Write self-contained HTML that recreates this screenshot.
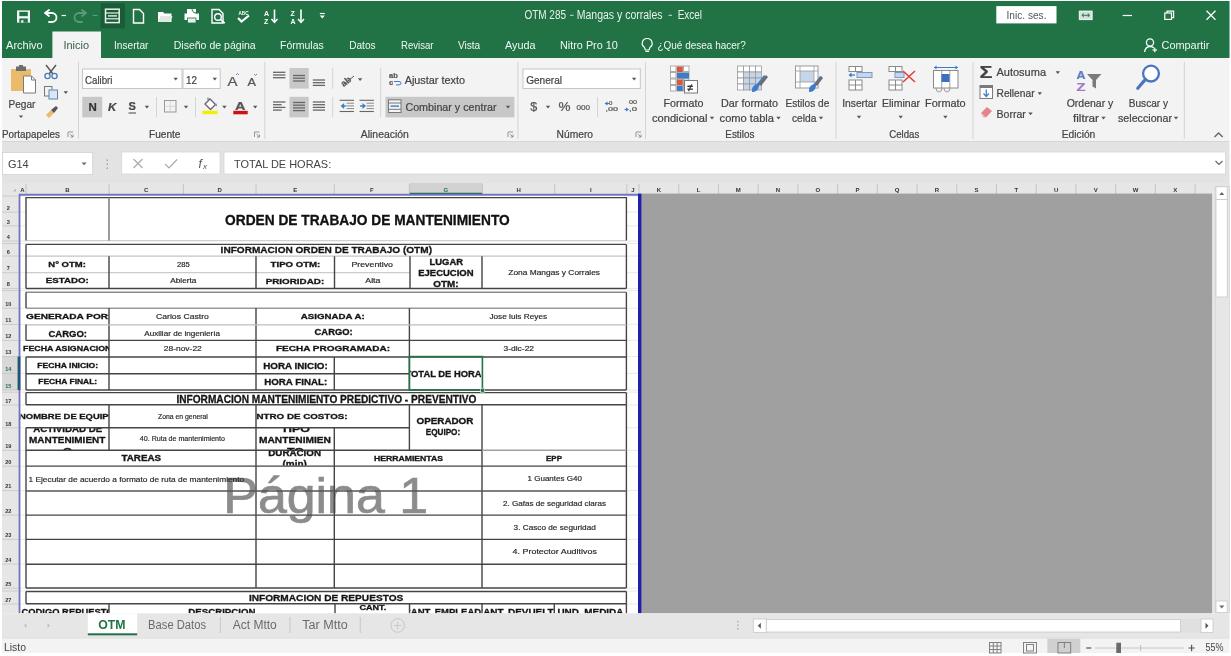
<!DOCTYPE html>
<html><head><meta charset="utf-8"><style>
html,body{margin:0;padding:0;background:#fff;overflow:hidden;}
body{width:1231px;height:656px;position:relative;}
svg{position:absolute;left:0;top:0;display:block;filter:blur(0.45px);}
text{font-family:"Liberation Sans",sans-serif;}
</style></head><body>
<svg width="1231" height="656" viewBox="0 0 1231 656" shape-rendering="auto">
<rect x="2.00" y="1.00" width="1227.50" height="57.00" fill="#217346" />
<rect x="100.60" y="3.20" width="24.40" height="25.20" fill="#1b5c38" />
<rect x="17.00" y="10.40" width="13.00" height="12.20" fill="#f4f8f5" />
<rect x="19.30" y="11.80" width="8.50" height="4.40" fill="#217346" />
<rect x="19.30" y="18.40" width="8.50" height="4.20" fill="#217346" />
<rect x="21.20" y="20.20" width="2.20" height="2.40" fill="#f4f8f5" />
<path d="M45,13 l4,-3 M45,13 l4,3 M45,13 h7 a4.5,4.5 0 0 1 0,9 h-3" fill="none" stroke="#ffffff" stroke-width="1.8" stroke-linecap="round"/>
<line x1="61.60" y1="15.50" x2="65.90" y2="15.50" stroke="#ffffff" stroke-width="1.2" />
<path d="M86,13 l-4,-3 M86,13 l-4,3 M86,13 h-7 a4.5,4.5 0 0 0 0,9 h3" fill="none" stroke="#5c9b78" stroke-width="1.8" stroke-linecap="round"/>
<line x1="92.70" y1="15.50" x2="97.60" y2="15.50" stroke="#5c9b78" stroke-width="1.2" />
<rect x="105.50" y="9.20" width="13.70" height="13.40" fill="none" stroke="#e8f0ea" stroke-width="1.5"/>
<line x1="105.50" y1="13.00" x2="119.20" y2="13.00" stroke="#e8f0ea" stroke-width="1.2" />
<line x1="105.50" y1="18.80" x2="119.20" y2="18.80" stroke="#e8f0ea" stroke-width="1.2" />
<line x1="108.00" y1="15.90" x2="117.00" y2="15.90" stroke="#e8f0ea" stroke-width="1.4" />
<path d="M133.5,9.5 h6 l4,4 v9.5 h-10 z" fill="none" stroke="#ffffff" stroke-width="1.4" />
<path d="M158,12 h5 l1.5,1.5 h7 v8.5 h-13.5 z" fill="#ffffff" stroke="none" stroke-width="1" />
<path d="M158,22 l2.5,-6 h12 l-2.5,6 z" fill="#dfe9e2" stroke="none" stroke-width="1" />
<rect x="187.00" y="9.00" width="9.00" height="5.00" fill="#ffffff" />
<rect x="184.50" y="13.50" width="14.50" height="6.50" fill="#ffffff" />
<rect x="187.50" y="18.00" width="8.50" height="5.00" fill="#e8efe9" stroke="#217346" stroke-width="0.8"/>
<path d="M192,9 a4,4 0 1 1 0,0.1" fill="none" stroke="#217346" stroke-width="1" />
<path d="M212,9.5 h7 l4,4 v9.5 h-11 z" fill="none" stroke="#ffffff" stroke-width="1.4" />
<circle cx="218" cy="17" r="3.3" fill="none" stroke="#ffffff" stroke-width="1.4"/>
<line x1="220.30" y1="19.30" x2="224.80" y2="23.20" stroke="#ffffff" stroke-width="1.6" />
<text x="238.50" y="14.50" font-family="Liberation Sans" font-size="5.5" font-weight="bold" fill="#ffffff" text-anchor="start" textLength="10.00" lengthAdjust="spacingAndGlyphs" >ABC</text>
<path d="M238,18 l3.5,3.5 l7.5,-6" fill="none" stroke="#ffffff" stroke-width="2.2" />
<text x="264.00" y="16.00" font-family="Liberation Sans" font-size="7" font-weight="bold" fill="#ffffff" text-anchor="start" >A</text>
<text x="264.00" y="23.50" font-family="Liberation Sans" font-size="7" font-weight="bold" fill="#ffffff" text-anchor="start" >Z</text>
<line x1="274.50" y1="9.50" x2="274.50" y2="22.00" stroke="#ffffff" stroke-width="1.6" />
<path d="M271.5,19 l3,3.5 l3,-3.5" fill="none" stroke="#ffffff" stroke-width="1.4" />
<text x="290.50" y="16.00" font-family="Liberation Sans" font-size="7" font-weight="bold" fill="#ffffff" text-anchor="start" >Z</text>
<text x="290.50" y="23.50" font-family="Liberation Sans" font-size="7" font-weight="bold" fill="#ffffff" text-anchor="start" >A</text>
<line x1="301.00" y1="9.50" x2="301.00" y2="22.00" stroke="#ffffff" stroke-width="1.6" />
<path d="M298,19 l3,3.5 l3,-3.5" fill="none" stroke="#ffffff" stroke-width="1.4" />
<line x1="319.80" y1="13.50" x2="324.80" y2="13.50" stroke="#ffffff" stroke-width="1.1" />
<path d="M319.8,15.5 h5 l-2.5,3 z" fill="#ffffff" stroke="none" stroke-width="1" />
<text x="524.40" y="19.30" font-family="Liberation Sans" font-size="12" font-weight="normal" fill="#e9f1ec" text-anchor="start" textLength="41.60" lengthAdjust="spacingAndGlyphs" >OTM 285</text>
<line x1="570.00" y1="15.30" x2="573.50" y2="15.30" stroke="#c8dccf" stroke-width="1" />
<text x="576.80" y="19.30" font-family="Liberation Sans" font-size="12" font-weight="normal" fill="#e9f1ec" text-anchor="start" textLength="85.70" lengthAdjust="spacingAndGlyphs" >Mangas y corrales</text>
<line x1="668.50" y1="15.30" x2="672.00" y2="15.30" stroke="#c8dccf" stroke-width="1" />
<text x="677.70" y="19.30" font-family="Liberation Sans" font-size="12" font-weight="normal" fill="#e9f1ec" text-anchor="start" textLength="24.30" lengthAdjust="spacingAndGlyphs" >Excel</text>
<rect x="996.30" y="6.10" width="60.20" height="17.30" fill="#ffffff" />
<text x="1006.50" y="19.40" font-family="Liberation Sans" font-size="10.5" font-weight="normal" fill="#555555" text-anchor="start" textLength="40.00" lengthAdjust="spacingAndGlyphs" >Inic. ses.</text>
<rect x="1079.50" y="11.30" width="12.50" height="8.10" fill="#cfe0d5" stroke="#e6efe9" stroke-width="1.4"/>
<path d="M1081.5,15.3 l2.2,-2.2 v4.4 z M1090,15.3 l-2.2,-2.2 v4.4 z" fill="#2e7a50" stroke="none" stroke-width="1" />
<line x1="1083.50" y1="15.30" x2="1088.00" y2="15.30" stroke="#2e7a50" stroke-width="1" />
<line x1="1122.70" y1="15.50" x2="1132.00" y2="15.50" stroke="#ffffff" stroke-width="1.2" />
<rect x="1164.80" y="13.00" width="6.70" height="6.40" fill="none" stroke="#fff" stroke-width="1.2"/>
<path d="M1167,13 v-1.8 h6.6 v6.5 h-2" fill="none" stroke="#ffffff" stroke-width="1.2" />
<path d="M1206.5,10.7 l9,9 M1215.5,10.7 l-9,9" fill="none" stroke="#ffffff" stroke-width="1.3" />
<rect x="52.40" y="31.50" width="48.60" height="26.50" fill="#f3f3f3" />
<text x="6.10" y="49.00" font-family="Liberation Sans" font-size="11.5" font-weight="normal" fill="#f2f6f3" text-anchor="start" textLength="36.60" lengthAdjust="spacingAndGlyphs" >Archivo</text>
<text x="114.00" y="49.00" font-family="Liberation Sans" font-size="11.5" font-weight="normal" fill="#f2f6f3" text-anchor="start" textLength="34.50" lengthAdjust="spacingAndGlyphs" >Insertar</text>
<text x="173.70" y="49.00" font-family="Liberation Sans" font-size="11.5" font-weight="normal" fill="#f2f6f3" text-anchor="start" textLength="82.00" lengthAdjust="spacingAndGlyphs" >Diseño de página</text>
<text x="280.00" y="49.00" font-family="Liberation Sans" font-size="11.5" font-weight="normal" fill="#f2f6f3" text-anchor="start" textLength="43.80" lengthAdjust="spacingAndGlyphs" >Fórmulas</text>
<text x="349.20" y="49.00" font-family="Liberation Sans" font-size="11.5" font-weight="normal" fill="#f2f6f3" text-anchor="start" textLength="26.40" lengthAdjust="spacingAndGlyphs" >Datos</text>
<text x="401.00" y="49.00" font-family="Liberation Sans" font-size="11.5" font-weight="normal" fill="#f2f6f3" text-anchor="start" textLength="32.50" lengthAdjust="spacingAndGlyphs" >Revisar</text>
<text x="457.90" y="49.00" font-family="Liberation Sans" font-size="11.5" font-weight="normal" fill="#f2f6f3" text-anchor="start" textLength="22.30" lengthAdjust="spacingAndGlyphs" >Vista</text>
<text x="505.00" y="49.00" font-family="Liberation Sans" font-size="11.5" font-weight="normal" fill="#f2f6f3" text-anchor="start" textLength="30.50" lengthAdjust="spacingAndGlyphs" >Ayuda</text>
<text x="560.00" y="49.00" font-family="Liberation Sans" font-size="11.5" font-weight="normal" fill="#f2f6f3" text-anchor="start" textLength="57.80" lengthAdjust="spacingAndGlyphs" >Nitro Pro 10</text>
<text x="657.40" y="49.00" font-family="Liberation Sans" font-size="11.5" font-weight="normal" fill="#f2f6f3" text-anchor="start" textLength="88.30" lengthAdjust="spacingAndGlyphs" >¿Qué desea hacer?</text>
<text x="63.40" y="49.00" font-family="Liberation Sans" font-size="11.5" font-weight="normal" fill="#3c5d49" text-anchor="start" textLength="25.60" lengthAdjust="spacingAndGlyphs" >Inicio</text>
<path d="M647.2,38.5 a4.8,4.8 0 0 1 2.8,8.8 l-1,2.7 h-3.6 l-1,-2.7 a4.8,4.8 0 0 1 2.8,-8.8 z" fill="none" stroke="#ffffff" stroke-width="1.2" />
<line x1="645.50" y1="51.50" x2="649.00" y2="51.50" stroke="#ffffff" stroke-width="1" />
<circle cx="1150" cy="42.5" r="3.6" fill="none" stroke="#ffffff" stroke-width="1.3"/>
<path d="M1144.5,52 q1,-5.5 5.5,-5.5 q2.5,0 4,1.6" fill="none" stroke="#ffffff" stroke-width="1.3" />
<line x1="1152.50" y1="50.00" x2="1157.00" y2="50.00" stroke="#ffffff" stroke-width="1.2" />
<line x1="1154.75" y1="47.80" x2="1154.75" y2="52.20" stroke="#ffffff" stroke-width="1.2" />
<text x="1161.50" y="49.00" font-family="Liberation Sans" font-size="11.5" font-weight="normal" fill="#f2f6f3" text-anchor="start" textLength="47.90" lengthAdjust="spacingAndGlyphs" >Compartir</text>
<rect x="2.00" y="58.00" width="1227.50" height="83.00" fill="#f3f3f3" />
<line x1="2.00" y1="141.50" x2="1229.50" y2="141.50" stroke="#d6d6d6" stroke-width="1" />
<rect x="2.00" y="142.00" width="1227.50" height="41.00" fill="#e3e3e3" />
<rect x="2.00" y="183.00" width="1227.50" height="11.00" fill="#e6e6e6" />
<rect x="11.00" y="69.00" width="20.00" height="22.00" fill="#e9bb6a" />
<rect x="16.00" y="66.50" width="10.00" height="4.50" fill="#6d6d6d" />
<rect x="19.00" y="65.00" width="4.00" height="2.00" fill="#6d6d6d" />
<path d="M23.5,76 h8 l4,4 v13 h-12 z" fill="#ffffff" stroke="#7a7a7a" stroke-width="1" />
<path d="M31.5,76 v4 h4" fill="none" stroke="#7a7a7a" stroke-width="1" />
<text x="8.50" y="107.50" font-family="Liberation Sans" font-size="11.5" font-weight="normal" fill="#444444" text-anchor="start" textLength="26.90" lengthAdjust="spacingAndGlyphs"  stroke="#444444" stroke-width="0.22">Pegar</text>
<path d="M18.80,115.50 h4.4 l-2.2,2.6 z" fill="#555" stroke="none" stroke-width="1" />
<path d="M46,65 l7,9 M56,65 l-7,9" fill="none" stroke="#555" stroke-width="1.4" />
<circle cx="47.5" cy="76" r="2.6" fill="none" stroke="#4a7ab8" stroke-width="1.3"/>
<circle cx="54.5" cy="76" r="2.6" fill="none" stroke="#4a7ab8" stroke-width="1.3"/>
<rect x="44.50" y="86.50" width="7.50" height="9.50" fill="#f3f3f3" stroke="#777" stroke-width="1"/>
<rect x="49.00" y="90.00" width="8.50" height="9.00" fill="#dce6f2" stroke="#5f85b5" stroke-width="1"/>
<path d="M63.60,91.30 h4.4 l-2.2,2.6 z" fill="#555" stroke="none" stroke-width="1" />
<path d="M46,115 l5,-5 l3,3 l-5,5 z" fill="#e9bb6a" stroke="none" stroke-width="1" />
<path d="M51,110 l5,-4 l2,2 l-4,5 z" fill="#555" stroke="none" stroke-width="1" />
<text x="2.00" y="137.80" font-family="Liberation Sans" font-size="11" font-weight="normal" fill="#444444" text-anchor="start" textLength="58.00" lengthAdjust="spacingAndGlyphs"  stroke="#444444" stroke-width="0.22">Portapapeles</text>
<path d="M68,137 v-5 h5" fill="none" stroke="#8a8a8a" stroke-width="0.9" />
<path d="M70,134 l3,3 M73,134.5 v2.5 h-2.5" fill="none" stroke="#8a8a8a" stroke-width="0.9" />
<line x1="78.50" y1="62.00" x2="78.50" y2="139.00" stroke="#d4d4d4" stroke-width="1" />
<rect x="82.50" y="69.00" width="99.50" height="19.50" fill="#ffffff" stroke="#c6c6c6" stroke-width="1"/>
<rect x="183.00" y="69.00" width="37.20" height="19.50" fill="#ffffff" stroke="#c6c6c6" stroke-width="1"/>
<text x="85.00" y="83.80" font-family="Liberation Sans" font-size="11.5" font-weight="normal" fill="#444444" text-anchor="start" textLength="27.50" lengthAdjust="spacingAndGlyphs"  stroke="#444444" stroke-width="0.22">Calibri</text>
<path d="M173.50,77.80 h4.4 l-2.2,2.6 z" fill="#555" stroke="none" stroke-width="1" />
<text x="186.00" y="83.80" font-family="Liberation Sans" font-size="11.5" font-weight="normal" fill="#444444" text-anchor="start" textLength="11.00" lengthAdjust="spacingAndGlyphs"  stroke="#444444" stroke-width="0.22">12</text>
<path d="M212.60,77.80 h4.4 l-2.2,2.6 z" fill="#555" stroke="none" stroke-width="1" />
<text x="227.50" y="86.00" font-family="Liberation Sans" font-size="13" font-weight="normal" fill="#555" text-anchor="start" textLength="10.00" lengthAdjust="spacingAndGlyphs"  stroke="#555" stroke-width="0.22">A</text>
<path d="M236,75 l1.5,-1.5 l1.5,1.5" fill="none" stroke="#5a8ad0" stroke-width="1" />
<text x="247.50" y="86.00" font-family="Liberation Sans" font-size="10.5" font-weight="normal" fill="#555" text-anchor="start" textLength="8.50" lengthAdjust="spacingAndGlyphs"  stroke="#555" stroke-width="0.22">A</text>
<path d="M254,74 l1.5,1.5 l1.5,-1.5" fill="none" stroke="#5a8ad0" stroke-width="1" />
<rect x="82.30" y="96.80" width="19.90" height="20.60" fill="#c8c8c8" />
<text x="88.50" y="111.00" font-family="Liberation Sans" font-size="11.5" font-weight="bold" fill="#333" text-anchor="start"  stroke="#333" stroke-width="0.22">N</text>
<text x="108.00" y="111.00" font-family="Liberation Sans" font-size="11.5" font-weight="bold" fill="#444" text-anchor="start" font-style="italic" stroke="#444" stroke-width="0.22">K</text>
<text x="128.50" y="110.00" font-family="Liberation Sans" font-size="11" font-weight="bold" fill="#444" text-anchor="start"  stroke="#444" stroke-width="0.22">S</text>
<line x1="128.50" y1="113.00" x2="136.00" y2="113.00" stroke="#444" stroke-width="1" />
<path d="M144.70,105.80 h4.4 l-2.2,2.6 z" fill="#555" stroke="none" stroke-width="1" />
<line x1="156.50" y1="97.00" x2="156.50" y2="117.00" stroke="#d4d4d4" stroke-width="1" />
<rect x="164.50" y="100.50" width="11.50" height="11.50" fill="none" stroke="#999" stroke-width="1"/>
<line x1="170.25" y1="100.50" x2="170.25" y2="112.00" stroke="#bbb" stroke-width="1" stroke-dasharray="1,1"/>
<line x1="164.50" y1="106.25" x2="176.00" y2="106.25" stroke="#bbb" stroke-width="1" stroke-dasharray="1,1"/>
<path d="M183.80,105.80 h4.4 l-2.2,2.6 z" fill="#555" stroke="none" stroke-width="1" />
<line x1="195.50" y1="97.00" x2="195.50" y2="117.00" stroke="#d4d4d4" stroke-width="1" />
<path d="M205,104 l5,-5 l5.5,5.5 l-5,5 z" fill="#ffffff" stroke="#666" stroke-width="1.3" />
<path d="M208,100 v-2.5" fill="none" stroke="#666" stroke-width="1" />
<path d="M214.5,104.5 l2,-1 l0.5,3 z" fill="#5a7fb0" stroke="none" stroke-width="1" />
<rect x="202.40" y="110.80" width="15.10" height="3.40" fill="#f2f000" />
<path d="M222.20,105.80 h4.4 l-2.2,2.6 z" fill="#555" stroke="none" stroke-width="1" />
<text x="235.00" y="109.80" font-family="Liberation Sans" font-size="11.5" font-weight="bold" fill="#555" text-anchor="start" textLength="10.50" lengthAdjust="spacingAndGlyphs"  stroke="#555" stroke-width="0.22">A</text>
<rect x="233.30" y="110.80" width="14.40" height="3.50" fill="#d01010" />
<path d="M253.00,105.80 h4.4 l-2.2,2.6 z" fill="#555" stroke="none" stroke-width="1" />
<text x="149.00" y="137.80" font-family="Liberation Sans" font-size="11" font-weight="normal" fill="#444444" text-anchor="start" textLength="31.50" lengthAdjust="spacingAndGlyphs"  stroke="#444444" stroke-width="0.22">Fuente</text>
<path d="M254.5,137 v-5 h5" fill="none" stroke="#8a8a8a" stroke-width="0.9" />
<path d="M256.5,134 l3,3 M259.5,134.5 v2.5 h-2.5" fill="none" stroke="#8a8a8a" stroke-width="0.9" />
<line x1="264.80" y1="62.00" x2="264.80" y2="139.00" stroke="#d4d4d4" stroke-width="1" />
<line x1="273.00" y1="72.30" x2="285.40" y2="72.30" stroke="#666" stroke-width="1.3" />
<line x1="273.00" y1="75.00" x2="285.40" y2="75.00" stroke="#666" stroke-width="1.3" />
<line x1="273.00" y1="77.70" x2="285.40" y2="77.70" stroke="#666" stroke-width="1.3" />
<rect x="289.50" y="68.00" width="19.20" height="20.60" fill="#c8c8c8" />
<line x1="293.00" y1="75.50" x2="305.00" y2="75.50" stroke="#666" stroke-width="1.3" />
<line x1="293.00" y1="78.20" x2="305.00" y2="78.20" stroke="#666" stroke-width="1.3" />
<line x1="293.00" y1="81.00" x2="305.00" y2="81.00" stroke="#666" stroke-width="1.3" />
<line x1="312.80" y1="80.00" x2="325.00" y2="80.00" stroke="#666" stroke-width="1.3" />
<line x1="312.80" y1="82.70" x2="325.00" y2="82.70" stroke="#666" stroke-width="1.3" />
<line x1="312.80" y1="85.40" x2="325.00" y2="85.40" stroke="#666" stroke-width="1.3" />
<line x1="332.70" y1="68.00" x2="332.70" y2="89.00" stroke="#d4d4d4" stroke-width="1" />
<text x="339.00" y="84.00" font-family="Liberation Sans" font-size="9" font-weight="bold" fill="#555" text-anchor="start" transform="rotate(-40 346 79)" stroke="#555" stroke-width="0.22">ab</text>
<path d="M343,85 l11,-9" fill="none" stroke="#555" stroke-width="1" />
<path d="M357.90,78.30 h4.4 l-2.2,2.6 z" fill="#555" stroke="none" stroke-width="1" />
<line x1="273.00" y1="102.00" x2="285.40" y2="102.00" stroke="#666" stroke-width="1.3" />
<line x1="273.00" y1="104.70" x2="281.68" y2="104.70" stroke="#666" stroke-width="1.3" />
<line x1="273.00" y1="107.40" x2="285.40" y2="107.40" stroke="#666" stroke-width="1.3" />
<line x1="273.00" y1="110.10" x2="281.68" y2="110.10" stroke="#666" stroke-width="1.3" />
<rect x="289.50" y="96.80" width="19.20" height="20.60" fill="#c8c8c8" />
<line x1="293.00" y1="102.50" x2="305.00" y2="102.50" stroke="#666" stroke-width="1.3" />
<line x1="293.00" y1="105.20" x2="305.00" y2="105.20" stroke="#666" stroke-width="1.3" />
<line x1="293.00" y1="107.90" x2="305.00" y2="107.90" stroke="#666" stroke-width="1.3" />
<line x1="293.00" y1="110.60" x2="305.00" y2="110.60" stroke="#666" stroke-width="1.3" />
<line x1="312.80" y1="102.00" x2="325.00" y2="102.00" stroke="#666" stroke-width="1.3" />
<line x1="312.80" y1="104.70" x2="325.00" y2="104.70" stroke="#666" stroke-width="1.3" />
<line x1="312.80" y1="107.40" x2="325.00" y2="107.40" stroke="#666" stroke-width="1.3" />
<line x1="312.80" y1="110.10" x2="325.00" y2="110.10" stroke="#666" stroke-width="1.3" />
<line x1="332.70" y1="97.00" x2="332.70" y2="117.00" stroke="#d4d4d4" stroke-width="1" />
<line x1="339.60" y1="100.30" x2="354.00" y2="100.30" stroke="#666" stroke-width="1.1" />
<line x1="339.60" y1="111.50" x2="354.00" y2="111.50" stroke="#666" stroke-width="1.1" />
<line x1="346.60" y1="103.20" x2="354.00" y2="103.20" stroke="#888" stroke-width="1" />
<line x1="346.60" y1="105.90" x2="354.00" y2="105.90" stroke="#888" stroke-width="1" />
<line x1="346.60" y1="108.60" x2="354.00" y2="108.60" stroke="#888" stroke-width="1" />
<path d="M340.6,106 l3.5,-3 v6 z" fill="#3f7cc8" stroke="none" stroke-width="1" />
<line x1="342.60" y1="106.00" x2="346.10" y2="106.00" stroke="#3f7cc8" stroke-width="1.4" />
<line x1="359.50" y1="100.30" x2="373.90" y2="100.30" stroke="#666" stroke-width="1.1" />
<line x1="359.50" y1="111.50" x2="373.90" y2="111.50" stroke="#666" stroke-width="1.1" />
<line x1="366.50" y1="103.20" x2="373.90" y2="103.20" stroke="#888" stroke-width="1" />
<line x1="366.50" y1="105.90" x2="373.90" y2="105.90" stroke="#888" stroke-width="1" />
<line x1="366.50" y1="108.60" x2="373.90" y2="108.60" stroke="#888" stroke-width="1" />
<path d="M366.0,106 l-3.5,-3 v6 z" fill="#3f7cc8" stroke="none" stroke-width="1" />
<line x1="360.00" y1="106.00" x2="363.50" y2="106.00" stroke="#3f7cc8" stroke-width="1.4" />
<line x1="380.70" y1="68.00" x2="380.70" y2="117.00" stroke="#d4d4d4" stroke-width="1" />
<text x="389.00" y="78.00" font-family="Liberation Sans" font-size="7.5" font-weight="bold" fill="#555" text-anchor="start"  stroke="#555" stroke-width="0.22">ab</text>
<text x="389.00" y="84.50" font-family="Liberation Sans" font-size="7.5" font-weight="bold" fill="#555" text-anchor="start"  stroke="#555" stroke-width="0.22">c</text>
<path d="M394,81.5 h5 q2,0 2,1.7 q0,1.7 -2,1.7 h-3" fill="none" stroke="#3f7cc8" stroke-width="1" />
<text x="404.70" y="83.80" font-family="Liberation Sans" font-size="11.5" font-weight="normal" fill="#444444" text-anchor="start" textLength="60.30" lengthAdjust="spacingAndGlyphs"  stroke="#444444" stroke-width="0.22">Ajustar texto</text>
<rect x="385.50" y="96.80" width="128.90" height="20.60" fill="#c8c8c8" />
<rect x="388.50" y="99.80" width="12.50" height="12.70" fill="#f3f3f3" stroke="#777" stroke-width="1"/>
<line x1="388.50" y1="103.00" x2="401.00" y2="103.00" stroke="#777" stroke-width="1" />
<line x1="388.50" y1="109.30" x2="401.00" y2="109.30" stroke="#777" stroke-width="1" />
<line x1="390.50" y1="106.10" x2="399.00" y2="106.10" stroke="#3f7cc8" stroke-width="1.4" />
<text x="405.40" y="111.20" font-family="Liberation Sans" font-size="11.5" font-weight="normal" fill="#444444" text-anchor="start" textLength="91.20" lengthAdjust="spacingAndGlyphs"  stroke="#444444" stroke-width="0.22">Combinar y centrar</text>
<path d="M505.80,105.80 h4.4 l-2.2,2.6 z" fill="#555" stroke="none" stroke-width="1" />
<text x="360.80" y="137.80" font-family="Liberation Sans" font-size="11" font-weight="normal" fill="#444444" text-anchor="start" textLength="48.00" lengthAdjust="spacingAndGlyphs"  stroke="#444444" stroke-width="0.22">Alineación</text>
<path d="M508,137 v-5 h5" fill="none" stroke="#8a8a8a" stroke-width="0.9" />
<path d="M510,134 l3,3 M513,134.5 v2.5 h-2.5" fill="none" stroke="#8a8a8a" stroke-width="0.9" />
<line x1="517.90" y1="62.00" x2="517.90" y2="139.00" stroke="#d4d4d4" stroke-width="1" />
<rect x="523.00" y="69.00" width="117.30" height="19.50" fill="#ffffff" stroke="#c6c6c6" stroke-width="1"/>
<text x="526.20" y="83.80" font-family="Liberation Sans" font-size="11.5" font-weight="normal" fill="#444444" text-anchor="start" textLength="35.80" lengthAdjust="spacingAndGlyphs"  stroke="#444444" stroke-width="0.22">General</text>
<path d="M631.90,77.80 h4.4 l-2.2,2.6 z" fill="#555" stroke="none" stroke-width="1" />
<text x="530.20" y="111.00" font-family="Liberation Sans" font-size="13" font-weight="normal" fill="#555" text-anchor="start" textLength="7.00" lengthAdjust="spacingAndGlyphs"  stroke="#555" stroke-width="0.22">$</text>
<path d="M545.80,105.80 h4.4 l-2.2,2.6 z" fill="#555" stroke="none" stroke-width="1" />
<text x="558.50" y="110.80" font-family="Liberation Sans" font-size="12" font-weight="normal" fill="#555" text-anchor="start" textLength="12.00" lengthAdjust="spacingAndGlyphs"  stroke="#555" stroke-width="0.22">%</text>
<text x="576.50" y="109.50" font-family="Liberation Sans" font-size="8" font-weight="normal" fill="#555" text-anchor="start" textLength="13.50" lengthAdjust="spacingAndGlyphs"  stroke="#555" stroke-width="0.22">000</text>
<line x1="597.50" y1="97.00" x2="597.50" y2="117.00" stroke="#d4d4d4" stroke-width="1" />
<text x="609.00" y="104.50" font-family="Liberation Sans" font-size="6" font-weight="normal" fill="#555" text-anchor="start"  stroke="#555" stroke-width="0.22">0</text>
<text x="605.50" y="111.00" font-family="Liberation Sans" font-size="6" font-weight="normal" fill="#555" text-anchor="start" textLength="12.50" lengthAdjust="spacingAndGlyphs"  stroke="#555" stroke-width="0.22">,00</text>
<path d="M604.5,103.5 l3,-2 v4 z" fill="#3f7cc8" stroke="none" stroke-width="1" />
<line x1="606.00" y1="103.50" x2="609.50" y2="103.50" stroke="#3f7cc8" stroke-width="1.1" />
<text x="629.00" y="104.00" font-family="Liberation Sans" font-size="6" font-weight="normal" fill="#555" text-anchor="start" textLength="8.00" lengthAdjust="spacingAndGlyphs"  stroke="#555" stroke-width="0.22">00</text>
<text x="629.00" y="111.00" font-family="Liberation Sans" font-size="6" font-weight="normal" fill="#555" text-anchor="start" textLength="8.00" lengthAdjust="spacingAndGlyphs"  stroke="#555" stroke-width="0.22">,0</text>
<path d="M629,109.5 l-3,-2 v4 z" fill="#3f7cc8" stroke="none" stroke-width="1" />
<line x1="624.50" y1="109.50" x2="628.00" y2="109.50" stroke="#3f7cc8" stroke-width="1.1" />
<text x="556.60" y="137.80" font-family="Liberation Sans" font-size="11" font-weight="normal" fill="#444444" text-anchor="start" textLength="36.40" lengthAdjust="spacingAndGlyphs"  stroke="#444444" stroke-width="0.22">Número</text>
<path d="M636,137 v-5 h5" fill="none" stroke="#8a8a8a" stroke-width="0.9" />
<path d="M638,134 l3,3 M641,134.5 v2.5 h-2.5" fill="none" stroke="#8a8a8a" stroke-width="0.9" />
<line x1="645.50" y1="62.00" x2="645.50" y2="139.00" stroke="#d4d4d4" stroke-width="1" />
<rect x="670.50" y="66.00" width="5.50" height="5.50" fill="#ffffff" stroke="#9a9a9a" stroke-width="0.8"/>
<rect x="677.00" y="66.00" width="5.50" height="5.50" fill="#ffffff" stroke="#9a9a9a" stroke-width="0.8"/>
<rect x="683.50" y="66.00" width="5.50" height="5.50" fill="#ffffff" stroke="#9a9a9a" stroke-width="0.8"/>
<rect x="670.50" y="72.50" width="5.50" height="5.50" fill="#ffffff" stroke="#9a9a9a" stroke-width="0.8"/>
<rect x="677.00" y="72.50" width="5.50" height="5.50" fill="#ffffff" stroke="#9a9a9a" stroke-width="0.8"/>
<rect x="683.50" y="72.50" width="5.50" height="5.50" fill="#ffffff" stroke="#9a9a9a" stroke-width="0.8"/>
<rect x="670.50" y="79.00" width="5.50" height="5.50" fill="#ffffff" stroke="#9a9a9a" stroke-width="0.8"/>
<rect x="677.00" y="79.00" width="5.50" height="5.50" fill="#ffffff" stroke="#9a9a9a" stroke-width="0.8"/>
<rect x="683.50" y="79.00" width="5.50" height="5.50" fill="#ffffff" stroke="#9a9a9a" stroke-width="0.8"/>
<rect x="670.50" y="85.50" width="5.50" height="5.50" fill="#ffffff" stroke="#9a9a9a" stroke-width="0.8"/>
<rect x="677.00" y="85.50" width="5.50" height="5.50" fill="#ffffff" stroke="#9a9a9a" stroke-width="0.8"/>
<rect x="683.50" y="85.50" width="5.50" height="5.50" fill="#ffffff" stroke="#9a9a9a" stroke-width="0.8"/>
<rect x="677.00" y="66.50" width="5.50" height="5.50" fill="#d9573b" />
<rect x="677.00" y="73.00" width="12.00" height="5.50" fill="#3f7cc8" />
<rect x="677.00" y="79.50" width="5.50" height="5.50" fill="#d9573b" />
<rect x="677.00" y="86.00" width="5.50" height="5.00" fill="#3f7cc8" />
<rect x="684.50" y="80.50" width="13.00" height="12.50" fill="#ffffff" stroke="#777" stroke-width="1"/>
<text x="687.50" y="90.50" font-family="Liberation Sans" font-size="10" font-weight="bold" fill="#333" text-anchor="start"  stroke="#333" stroke-width="0.22">≠</text>
<text x="663.50" y="107.00" font-family="Liberation Sans" font-size="11.5" font-weight="normal" fill="#444444" text-anchor="start" textLength="39.90" lengthAdjust="spacingAndGlyphs"  stroke="#444444" stroke-width="0.22">Formato</text>
<text x="652.00" y="121.50" font-family="Liberation Sans" font-size="11.5" font-weight="normal" fill="#444444" text-anchor="start" textLength="55.50" lengthAdjust="spacingAndGlyphs"  stroke="#444444" stroke-width="0.22">condicional</text>
<path d="M709.80,116.80 h4.4 l-2.2,2.6 z" fill="#555" stroke="none" stroke-width="1" />
<rect x="737.50" y="66.00" width="6.00" height="6.00" fill="#ffffff" stroke="#9a9a9a" stroke-width="0.8"/>
<rect x="743.50" y="66.00" width="6.00" height="6.00" fill="#ffffff" stroke="#9a9a9a" stroke-width="0.8"/>
<rect x="749.50" y="66.00" width="6.00" height="6.00" fill="#ffffff" stroke="#9a9a9a" stroke-width="0.8"/>
<rect x="755.50" y="66.00" width="6.00" height="6.00" fill="#ffffff" stroke="#9a9a9a" stroke-width="0.8"/>
<rect x="737.50" y="72.00" width="6.00" height="6.00" fill="#ffffff" stroke="#9a9a9a" stroke-width="0.8"/>
<rect x="743.50" y="72.00" width="6.00" height="6.00" fill="#c5d5ea" stroke="#9a9a9a" stroke-width="0.8"/>
<rect x="749.50" y="72.00" width="6.00" height="6.00" fill="#c5d5ea" stroke="#9a9a9a" stroke-width="0.8"/>
<rect x="755.50" y="72.00" width="6.00" height="6.00" fill="#c5d5ea" stroke="#9a9a9a" stroke-width="0.8"/>
<rect x="737.50" y="78.00" width="6.00" height="6.00" fill="#ffffff" stroke="#9a9a9a" stroke-width="0.8"/>
<rect x="743.50" y="78.00" width="6.00" height="6.00" fill="#c5d5ea" stroke="#9a9a9a" stroke-width="0.8"/>
<rect x="749.50" y="78.00" width="6.00" height="6.00" fill="#c5d5ea" stroke="#9a9a9a" stroke-width="0.8"/>
<rect x="755.50" y="78.00" width="6.00" height="6.00" fill="#c5d5ea" stroke="#9a9a9a" stroke-width="0.8"/>
<rect x="737.50" y="84.00" width="6.00" height="6.00" fill="#ffffff" stroke="#9a9a9a" stroke-width="0.8"/>
<rect x="743.50" y="84.00" width="6.00" height="6.00" fill="#c5d5ea" stroke="#9a9a9a" stroke-width="0.8"/>
<rect x="749.50" y="84.00" width="6.00" height="6.00" fill="#c5d5ea" stroke="#9a9a9a" stroke-width="0.8"/>
<rect x="755.50" y="84.00" width="6.00" height="6.00" fill="#c5d5ea" stroke="#9a9a9a" stroke-width="0.8"/>
<path d="M752,92 q-1,-6 5,-8 l7,-9 l2,2 l-7,9 q-1,6 -7,6 z" fill="#3f7cc8" stroke="none" stroke-width="1" />
<path d="M759,84 l7,-9 l2,2 l-7,9 z" fill="#6d6d6d" stroke="none" stroke-width="1" />
<text x="721.00" y="107.00" font-family="Liberation Sans" font-size="11.5" font-weight="normal" fill="#444444" text-anchor="start" textLength="57.00" lengthAdjust="spacingAndGlyphs"  stroke="#444444" stroke-width="0.22">Dar formato</text>
<text x="719.60" y="121.50" font-family="Liberation Sans" font-size="11.5" font-weight="normal" fill="#444444" text-anchor="start" textLength="54.40" lengthAdjust="spacingAndGlyphs"  stroke="#444444" stroke-width="0.22">como tabla</text>
<path d="M776.30,116.80 h4.4 l-2.2,2.6 z" fill="#555" stroke="none" stroke-width="1" />
<rect x="795.50" y="66.00" width="22.50" height="22.00" fill="#ffffff" stroke="#9a9a9a" stroke-width="1"/>
<rect x="800.00" y="71.00" width="14.00" height="11.00" fill="#c5d5ea" />
<line x1="795.50" y1="71.00" x2="818.00" y2="71.00" stroke="#9a9a9a" stroke-width="0.8" />
<line x1="800.00" y1="66.00" x2="800.00" y2="88.00" stroke="#9a9a9a" stroke-width="0.8" />
<line x1="814.00" y1="66.00" x2="814.00" y2="88.00" stroke="#9a9a9a" stroke-width="0.8" />
<line x1="795.50" y1="82.00" x2="818.00" y2="82.00" stroke="#9a9a9a" stroke-width="0.8" />
<path d="M809,92 q-1,-6 5,-8 l6,-8 l2,2 l-6,8 q-1,6 -7,6 z" fill="#3f7cc8" stroke="none" stroke-width="1" />
<path d="M815,84 l6,-8 l2,2 l-6,8 z" fill="#6d6d6d" stroke="none" stroke-width="1" />
<text x="785.40" y="107.00" font-family="Liberation Sans" font-size="11.5" font-weight="normal" fill="#444444" text-anchor="start" textLength="43.90" lengthAdjust="spacingAndGlyphs"  stroke="#444444" stroke-width="0.22">Estilos de</text>
<text x="792.00" y="121.50" font-family="Liberation Sans" font-size="11.5" font-weight="normal" fill="#444444" text-anchor="start" textLength="24.50" lengthAdjust="spacingAndGlyphs"  stroke="#444444" stroke-width="0.22">celda</text>
<path d="M818.80,116.80 h4.4 l-2.2,2.6 z" fill="#555" stroke="none" stroke-width="1" />
<text x="725.30" y="137.80" font-family="Liberation Sans" font-size="11" font-weight="normal" fill="#444444" text-anchor="start" textLength="29.20" lengthAdjust="spacingAndGlyphs"  stroke="#444444" stroke-width="0.22">Estilos</text>
<line x1="836.00" y1="62.00" x2="836.00" y2="139.00" stroke="#d4d4d4" stroke-width="1" />
<rect x="849.00" y="66.50" width="13.00" height="5.00" fill="#fff" stroke="#8a8a8a" stroke-width="1"/>
<line x1="855.50" y1="66.50" x2="855.50" y2="71.50" stroke="#8a8a8a" stroke-width="1" />
<rect x="857.00" y="72.50" width="15.00" height="5.00" fill="#c5d5ea" stroke="#7a9ac5" stroke-width="1"/>
<path d="M848.5,75 l3,-2.5 v5 z" fill="#3f7cc8" stroke="none" stroke-width="1" />
<line x1="850.00" y1="75.00" x2="855.00" y2="75.00" stroke="#3f7cc8" stroke-width="1.3" />
<rect x="849.00" y="80.00" width="13.00" height="10.00" fill="#fff" stroke="#8a8a8a" stroke-width="1"/>
<line x1="855.50" y1="80.00" x2="855.50" y2="90.00" stroke="#8a8a8a" stroke-width="1" />
<line x1="849.00" y1="85.00" x2="862.00" y2="85.00" stroke="#8a8a8a" stroke-width="1" />
<text x="842.20" y="107.00" font-family="Liberation Sans" font-size="11.5" font-weight="normal" fill="#444444" text-anchor="start" textLength="34.80" lengthAdjust="spacingAndGlyphs"  stroke="#444444" stroke-width="0.22">Insertar</text>
<path d="M856.80,115.80 h4.4 l-2.2,2.6 z" fill="#555" stroke="none" stroke-width="1" />
<rect x="889.00" y="66.50" width="13.00" height="5.00" fill="#fff" stroke="#8a8a8a" stroke-width="1"/>
<line x1="895.50" y1="66.50" x2="895.50" y2="71.50" stroke="#8a8a8a" stroke-width="1" />
<rect x="895.00" y="72.50" width="9.00" height="5.00" fill="#c5d5ea" stroke="#7a9ac5" stroke-width="1"/>
<rect x="889.00" y="80.00" width="13.00" height="10.00" fill="#fff" stroke="#8a8a8a" stroke-width="1"/>
<line x1="895.50" y1="80.00" x2="895.50" y2="90.00" stroke="#8a8a8a" stroke-width="1" />
<line x1="889.00" y1="85.00" x2="902.00" y2="85.00" stroke="#8a8a8a" stroke-width="1" />
<path d="M903,71 l12,11 M915,71 l-12,11" fill="none" stroke="#e0413a" stroke-width="1.6" />
<text x="882.00" y="107.00" font-family="Liberation Sans" font-size="11.5" font-weight="normal" fill="#444444" text-anchor="start" textLength="38.00" lengthAdjust="spacingAndGlyphs"  stroke="#444444" stroke-width="0.22">Eliminar</text>
<path d="M898.50,115.80 h4.4 l-2.2,2.6 z" fill="#555" stroke="none" stroke-width="1" />
<line x1="934.00" y1="67.50" x2="958.00" y2="67.50" stroke="#3f7cc8" stroke-width="1" />
<path d="M934,67.5 l2.5,-2 v4 z M958,67.5 l-2.5,-2 v4 z" fill="#3f7cc8" stroke="none" stroke-width="1" />
<rect x="933.50" y="70.50" width="24.50" height="17.50" fill="#fff" stroke="#8a8a8a" stroke-width="1"/>
<line x1="941.70" y1="70.50" x2="941.70" y2="88.00" stroke="#8a8a8a" stroke-width="0.8" />
<line x1="949.80" y1="70.50" x2="949.80" y2="88.00" stroke="#8a8a8a" stroke-width="0.8" />
<rect x="941.50" y="74.00" width="8.00" height="8.00" fill="#3f6ec0" />
<path d="M936,88 q0,4 3,4 q3,0 3,-4 M944,88 q0,4 3,4 q3,0 3,-4" fill="none" stroke="#8a8a8a" stroke-width="0.8" />
<text x="925.00" y="107.00" font-family="Liberation Sans" font-size="11.5" font-weight="normal" fill="#444444" text-anchor="start" textLength="40.70" lengthAdjust="spacingAndGlyphs"  stroke="#444444" stroke-width="0.22">Formato</text>
<path d="M943.20,115.80 h4.4 l-2.2,2.6 z" fill="#555" stroke="none" stroke-width="1" />
<text x="889.30" y="137.80" font-family="Liberation Sans" font-size="11" font-weight="normal" fill="#444444" text-anchor="start" textLength="30.00" lengthAdjust="spacingAndGlyphs"  stroke="#444444" stroke-width="0.22">Celdas</text>
<line x1="973.00" y1="62.00" x2="973.00" y2="139.00" stroke="#d4d4d4" stroke-width="1" />
<text x="979.50" y="78.30" font-family="Liberation Sans" font-size="17" font-weight="bold" fill="#444" text-anchor="start" textLength="13.00" lengthAdjust="spacingAndGlyphs"  stroke="#444" stroke-width="0.22">Σ</text>
<text x="996.50" y="76.20" font-family="Liberation Sans" font-size="11.5" font-weight="normal" fill="#444444" text-anchor="start" textLength="49.50" lengthAdjust="spacingAndGlyphs"  stroke="#444444" stroke-width="0.22">Autosuma</text>
<path d="M1055.60,71.30 h4.4 l-2.2,2.6 z" fill="#555" stroke="none" stroke-width="1" />
<rect x="980.00" y="85.50" width="12.50" height="13.00" fill="#fff" stroke="#7a7a7a" stroke-width="1"/>
<rect x="980.00" y="85.50" width="12.50" height="2.50" fill="#7a7a7a" />
<line x1="986.25" y1="89.50" x2="986.25" y2="96.00" stroke="#3f7cc8" stroke-width="1.3" />
<path d="M983.5,93.5 l2.75,3 l2.75,-3" fill="none" stroke="#3f7cc8" stroke-width="1.2" />
<text x="996.50" y="97.40" font-family="Liberation Sans" font-size="11.5" font-weight="normal" fill="#444444" text-anchor="start" textLength="38.10" lengthAdjust="spacingAndGlyphs"  stroke="#444444" stroke-width="0.22">Rellenar</text>
<path d="M1037.60,92.30 h4.4 l-2.2,2.6 z" fill="#555" stroke="none" stroke-width="1" />
<path d="M981,113 l6,-6 l5,4 l-6,6.5 z" fill="#e8828c" stroke="none" stroke-width="1" />
<path d="M980.5,114 l3,3.5 h3" fill="#f0a8ae" stroke="none" stroke-width="1" />
<text x="996.50" y="117.60" font-family="Liberation Sans" font-size="11.5" font-weight="normal" fill="#444444" text-anchor="start" textLength="29.30" lengthAdjust="spacingAndGlyphs"  stroke="#444444" stroke-width="0.22">Borrar</text>
<path d="M1028.30,112.60 h4.4 l-2.2,2.6 z" fill="#555" stroke="none" stroke-width="1" />
<text x="1076.50" y="79.00" font-family="Liberation Sans" font-size="11" font-weight="bold" fill="#5a7fc0" text-anchor="start" textLength="9.00" lengthAdjust="spacingAndGlyphs"  stroke="#5a7fc0" stroke-width="0.22">A</text>
<text x="1076.50" y="90.50" font-family="Liberation Sans" font-size="11" font-weight="bold" fill="#a07cc0" text-anchor="start" textLength="9.00" lengthAdjust="spacingAndGlyphs"  stroke="#a07cc0" stroke-width="0.22">Z</text>
<path d="M1087,74 h14.5 l-5.5,6 v8.5 l-3.5,-2 v-6.5 z" fill="#7a7a7a" stroke="none" stroke-width="1" />
<text x="1066.70" y="107.00" font-family="Liberation Sans" font-size="11.5" font-weight="normal" fill="#444444" text-anchor="start" textLength="46.60" lengthAdjust="spacingAndGlyphs"  stroke="#444444" stroke-width="0.22">Ordenar y</text>
<text x="1073.00" y="121.50" font-family="Liberation Sans" font-size="11.5" font-weight="normal" fill="#444444" text-anchor="start" textLength="26.00" lengthAdjust="spacingAndGlyphs"  stroke="#444444" stroke-width="0.22">filtrar</text>
<path d="M1101.30,116.80 h4.4 l-2.2,2.6 z" fill="#555" stroke="none" stroke-width="1" />
<circle cx="1151" cy="73.6" r="7.9" fill="#ffffff" stroke="#4a74c0" stroke-width="2.3"/>
<line x1="1145.40" y1="79.40" x2="1137.80" y2="88.20" stroke="#4a74c0" stroke-width="3.2" stroke-linecap="round"/>
<text x="1128.80" y="107.00" font-family="Liberation Sans" font-size="11.5" font-weight="normal" fill="#444444" text-anchor="start" textLength="39.20" lengthAdjust="spacingAndGlyphs"  stroke="#444444" stroke-width="0.22">Buscar y</text>
<text x="1118.00" y="121.50" font-family="Liberation Sans" font-size="11.5" font-weight="normal" fill="#444444" text-anchor="start" textLength="54.00" lengthAdjust="spacingAndGlyphs"  stroke="#444444" stroke-width="0.22">seleccionar</text>
<path d="M1173.80,116.80 h4.4 l-2.2,2.6 z" fill="#555" stroke="none" stroke-width="1" />
<text x="1061.80" y="137.80" font-family="Liberation Sans" font-size="11" font-weight="normal" fill="#444444" text-anchor="start" textLength="33.50" lengthAdjust="spacingAndGlyphs"  stroke="#444444" stroke-width="0.22">Edición</text>
<line x1="1184.30" y1="62.00" x2="1184.30" y2="139.00" stroke="#d4d4d4" stroke-width="1" />
<path d="M1214.5,137 l4.1,-4 l4.1,4" fill="none" stroke="#666" stroke-width="1.4" />
<rect x="2.40" y="152.50" width="90.30" height="22.00" fill="#ffffff" stroke="#d0d0d0" stroke-width="0.8"/>
<text x="7.90" y="168.30" font-family="Liberation Sans" font-size="11.5" font-weight="normal" fill="#444444" text-anchor="start" textLength="20.80" lengthAdjust="spacingAndGlyphs" >G14</text>
<path d="M81.6,162.5 h5 l-2.5,2.8 z" fill="#666" stroke="none" stroke-width="1" />
<rect x="106.60" y="159.50" width="1.40" height="1.40" fill="#9a9a9a" />
<rect x="106.60" y="163.50" width="1.40" height="1.40" fill="#9a9a9a" />
<rect x="106.60" y="167.50" width="1.40" height="1.40" fill="#9a9a9a" />
<rect x="121.70" y="152.00" width="98.30" height="22.00" fill="#ffffff" stroke="#d6d6d6" stroke-width="0.8"/>
<path d="M133.5,159 l9,9 M142.5,159 l-9,9" fill="none" stroke="#a8a8a8" stroke-width="1.1" />
<path d="M165,164 l4,4 l8,-8.5" fill="none" stroke="#a8a8a8" stroke-width="1.1" />
<text x="198.50" y="167.50" font-family="Liberation Sans" font-size="12" font-weight="normal" fill="#555" text-anchor="start" font-style="italic" font-family="Liberation Serif">f</text>
<text x="203.00" y="168.50" font-family="Liberation Sans" font-size="8" font-weight="normal" fill="#555" text-anchor="start" font-style="italic" font-family="Liberation Serif">x</text>
<rect x="224.00" y="152.00" width="1001.60" height="22.00" fill="#ffffff" stroke="#d6d6d6" stroke-width="0.8"/>
<text x="234.00" y="168.20" font-family="Liberation Sans" font-size="11.5" font-weight="normal" fill="#444444" text-anchor="start" textLength="97.20" lengthAdjust="spacingAndGlyphs" >TOTAL DE HORAS:</text>
<path d="M1215.5,161 l3.5,3.5 l3.5,-3.5" fill="none" stroke="#666" stroke-width="1.2" />
<rect x="2.00" y="183.00" width="1210.50" height="11.00" fill="#e6e6e6" />
<rect x="409.40" y="183.00" width="73.00" height="11.00" fill="#d2d2d2" />
<line x1="409.40" y1="193.30" x2="482.40" y2="193.30" stroke="#217346" stroke-width="1.2" />
<line x1="26.00" y1="184.00" x2="26.00" y2="194.00" stroke="#bdbdbd" stroke-width="0.8" />
<line x1="109.00" y1="184.00" x2="109.00" y2="194.00" stroke="#bdbdbd" stroke-width="0.8" />
<line x1="183.40" y1="184.00" x2="183.40" y2="194.00" stroke="#bdbdbd" stroke-width="0.8" />
<line x1="256.00" y1="184.00" x2="256.00" y2="194.00" stroke="#bdbdbd" stroke-width="0.8" />
<line x1="334.30" y1="184.00" x2="334.30" y2="194.00" stroke="#bdbdbd" stroke-width="0.8" />
<line x1="409.40" y1="184.00" x2="409.40" y2="194.00" stroke="#bdbdbd" stroke-width="0.8" />
<line x1="482.40" y1="184.00" x2="482.40" y2="194.00" stroke="#bdbdbd" stroke-width="0.8" />
<line x1="554.70" y1="184.00" x2="554.70" y2="194.00" stroke="#bdbdbd" stroke-width="0.8" />
<line x1="626.80" y1="184.00" x2="626.80" y2="194.00" stroke="#bdbdbd" stroke-width="0.8" />
<line x1="639.00" y1="184.00" x2="639.00" y2="194.00" stroke="#bdbdbd" stroke-width="0.8" />
<line x1="678.72" y1="184.00" x2="678.72" y2="194.00" stroke="#bdbdbd" stroke-width="0.8" />
<line x1="718.44" y1="184.00" x2="718.44" y2="194.00" stroke="#bdbdbd" stroke-width="0.8" />
<line x1="758.16" y1="184.00" x2="758.16" y2="194.00" stroke="#bdbdbd" stroke-width="0.8" />
<line x1="797.88" y1="184.00" x2="797.88" y2="194.00" stroke="#bdbdbd" stroke-width="0.8" />
<line x1="837.60" y1="184.00" x2="837.60" y2="194.00" stroke="#bdbdbd" stroke-width="0.8" />
<line x1="877.32" y1="184.00" x2="877.32" y2="194.00" stroke="#bdbdbd" stroke-width="0.8" />
<line x1="917.04" y1="184.00" x2="917.04" y2="194.00" stroke="#bdbdbd" stroke-width="0.8" />
<line x1="956.76" y1="184.00" x2="956.76" y2="194.00" stroke="#bdbdbd" stroke-width="0.8" />
<line x1="996.48" y1="184.00" x2="996.48" y2="194.00" stroke="#bdbdbd" stroke-width="0.8" />
<line x1="1036.20" y1="184.00" x2="1036.20" y2="194.00" stroke="#bdbdbd" stroke-width="0.8" />
<line x1="1075.92" y1="184.00" x2="1075.92" y2="194.00" stroke="#bdbdbd" stroke-width="0.8" />
<line x1="1115.64" y1="184.00" x2="1115.64" y2="194.00" stroke="#bdbdbd" stroke-width="0.8" />
<line x1="1155.36" y1="184.00" x2="1155.36" y2="194.00" stroke="#bdbdbd" stroke-width="0.8" />
<line x1="1195.08" y1="184.00" x2="1195.08" y2="194.00" stroke="#bdbdbd" stroke-width="0.8" />
<text x="22.50" y="191.50" font-family="Liberation Sans" font-size="6" font-weight="bold" fill="#333" text-anchor="middle" >A</text>
<text x="67.50" y="191.50" font-family="Liberation Sans" font-size="6" font-weight="bold" fill="#333" text-anchor="middle" >B</text>
<text x="146.20" y="191.50" font-family="Liberation Sans" font-size="6" font-weight="bold" fill="#333" text-anchor="middle" >C</text>
<text x="219.70" y="191.50" font-family="Liberation Sans" font-size="6" font-weight="bold" fill="#333" text-anchor="middle" >D</text>
<text x="295.15" y="191.50" font-family="Liberation Sans" font-size="6" font-weight="bold" fill="#333" text-anchor="middle" >E</text>
<text x="371.85" y="191.50" font-family="Liberation Sans" font-size="6" font-weight="bold" fill="#333" text-anchor="middle" >F</text>
<text x="445.90" y="191.50" font-family="Liberation Sans" font-size="6" font-weight="bold" fill="#217346" text-anchor="middle" >G</text>
<text x="518.55" y="191.50" font-family="Liberation Sans" font-size="6" font-weight="bold" fill="#333" text-anchor="middle" >H</text>
<text x="590.75" y="191.50" font-family="Liberation Sans" font-size="6" font-weight="bold" fill="#333" text-anchor="middle" >I</text>
<text x="632.90" y="191.50" font-family="Liberation Sans" font-size="6" font-weight="bold" fill="#333" text-anchor="middle" >J</text>
<text x="658.86" y="191.50" font-family="Liberation Sans" font-size="6" font-weight="bold" fill="#333" text-anchor="middle" >K</text>
<text x="698.58" y="191.50" font-family="Liberation Sans" font-size="6" font-weight="bold" fill="#333" text-anchor="middle" >L</text>
<text x="738.30" y="191.50" font-family="Liberation Sans" font-size="6" font-weight="bold" fill="#333" text-anchor="middle" >M</text>
<text x="778.02" y="191.50" font-family="Liberation Sans" font-size="6" font-weight="bold" fill="#333" text-anchor="middle" >N</text>
<text x="817.74" y="191.50" font-family="Liberation Sans" font-size="6" font-weight="bold" fill="#333" text-anchor="middle" >O</text>
<text x="857.46" y="191.50" font-family="Liberation Sans" font-size="6" font-weight="bold" fill="#333" text-anchor="middle" >P</text>
<text x="897.18" y="191.50" font-family="Liberation Sans" font-size="6" font-weight="bold" fill="#333" text-anchor="middle" >Q</text>
<text x="936.90" y="191.50" font-family="Liberation Sans" font-size="6" font-weight="bold" fill="#333" text-anchor="middle" >R</text>
<text x="976.62" y="191.50" font-family="Liberation Sans" font-size="6" font-weight="bold" fill="#333" text-anchor="middle" >S</text>
<text x="1016.34" y="191.50" font-family="Liberation Sans" font-size="6" font-weight="bold" fill="#333" text-anchor="middle" >T</text>
<text x="1056.06" y="191.50" font-family="Liberation Sans" font-size="6" font-weight="bold" fill="#333" text-anchor="middle" >U</text>
<text x="1095.78" y="191.50" font-family="Liberation Sans" font-size="6" font-weight="bold" fill="#333" text-anchor="middle" >V</text>
<text x="1135.50" y="191.50" font-family="Liberation Sans" font-size="6" font-weight="bold" fill="#333" text-anchor="middle" >W</text>
<text x="1175.22" y="191.50" font-family="Liberation Sans" font-size="6" font-weight="bold" fill="#333" text-anchor="middle" >X</text>
<path d="M13,191.5 l3,-3 v3 z" fill="#b8b8b8" stroke="none" stroke-width="1" />
<rect x="2.00" y="194.00" width="17.00" height="419.30" fill="#e6e6e6" />
<rect x="19.00" y="194.00" width="620.00" height="419.30" fill="#ffffff" />
<rect x="641.00" y="193.60" width="571.40" height="419.70" fill="#a0a0a0" />
<rect x="1212.40" y="183.00" width="17.10" height="430.30" fill="#e6e6e6" />
<rect x="1215.20" y="186.40" width="14.30" height="426.60" fill="#e6e6e6" stroke="#d0d0d0" stroke-width="0.6"/>
<rect x="1216.00" y="186.80" width="11.20" height="12.80" fill="#ffffff" stroke="#c8c8c8" stroke-width="0.8"/>
<path d="M1219.3,195 h5 l-2.5,-3 z" fill="#666" stroke="none" stroke-width="1" />
<rect x="1216.00" y="199.60" width="11.20" height="97.40" fill="#ffffff" stroke="#c8c8c8" stroke-width="0.8"/>
<rect x="1216.00" y="601.00" width="11.20" height="11.60" fill="#ffffff" stroke="#c8c8c8" stroke-width="0.8"/>
<path d="M1219.3,605.5 h5 l-2.5,3 z" fill="#666" stroke="none" stroke-width="1" />
<rect x="2.00" y="356.60" width="17.00" height="33.40" fill="#d8d8d8" />
<line x1="2.00" y1="196.10" x2="19.00" y2="196.10" stroke="#c4c4c4" stroke-width="0.8" />
<line x1="2.00" y1="212.10" x2="19.00" y2="212.10" stroke="#c4c4c4" stroke-width="0.8" />
<text x="8.30" y="209.80" font-family="Liberation Sans" font-size="5.6" font-weight="bold" fill="#333" text-anchor="middle" >2</text>
<line x1="2.00" y1="225.80" x2="19.00" y2="225.80" stroke="#c4c4c4" stroke-width="0.8" />
<text x="8.30" y="223.50" font-family="Liberation Sans" font-size="5.6" font-weight="bold" fill="#333" text-anchor="middle" >3</text>
<line x1="2.00" y1="241.00" x2="19.00" y2="241.00" stroke="#c4c4c4" stroke-width="0.8" />
<text x="8.30" y="238.70" font-family="Liberation Sans" font-size="5.6" font-weight="bold" fill="#333" text-anchor="middle" >4</text>
<line x1="2.00" y1="243.50" x2="19.00" y2="243.50" stroke="#c4c4c4" stroke-width="0.8" />
<line x1="2.00" y1="256.00" x2="19.00" y2="256.00" stroke="#c4c4c4" stroke-width="0.8" />
<text x="8.30" y="253.70" font-family="Liberation Sans" font-size="5.6" font-weight="bold" fill="#333" text-anchor="middle" >6</text>
<line x1="2.00" y1="272.70" x2="19.00" y2="272.70" stroke="#c4c4c4" stroke-width="0.8" />
<text x="8.30" y="270.40" font-family="Liberation Sans" font-size="5.6" font-weight="bold" fill="#333" text-anchor="middle" >7</text>
<line x1="2.00" y1="288.60" x2="19.00" y2="288.60" stroke="#c4c4c4" stroke-width="0.8" />
<text x="8.30" y="286.30" font-family="Liberation Sans" font-size="5.6" font-weight="bold" fill="#333" text-anchor="middle" >8</text>
<line x1="2.00" y1="290.60" x2="19.00" y2="290.60" stroke="#c4c4c4" stroke-width="0.8" />
<line x1="2.00" y1="308.20" x2="19.00" y2="308.20" stroke="#c4c4c4" stroke-width="0.8" />
<text x="8.30" y="305.90" font-family="Liberation Sans" font-size="5.6" font-weight="bold" fill="#333" text-anchor="middle" >10</text>
<line x1="2.00" y1="324.40" x2="19.00" y2="324.40" stroke="#c4c4c4" stroke-width="0.8" />
<text x="8.30" y="322.10" font-family="Liberation Sans" font-size="5.6" font-weight="bold" fill="#333" text-anchor="middle" >11</text>
<line x1="2.00" y1="340.40" x2="19.00" y2="340.40" stroke="#c4c4c4" stroke-width="0.8" />
<text x="8.30" y="338.10" font-family="Liberation Sans" font-size="5.6" font-weight="bold" fill="#333" text-anchor="middle" >12</text>
<line x1="2.00" y1="356.60" x2="19.00" y2="356.60" stroke="#c4c4c4" stroke-width="0.8" />
<text x="8.30" y="354.30" font-family="Liberation Sans" font-size="5.6" font-weight="bold" fill="#333" text-anchor="middle" >13</text>
<line x1="2.00" y1="373.40" x2="19.00" y2="373.40" stroke="#c4c4c4" stroke-width="0.8" />
<text x="8.30" y="371.10" font-family="Liberation Sans" font-size="5.6" font-weight="bold" fill="#217346" text-anchor="middle" >14</text>
<line x1="2.00" y1="390.00" x2="19.00" y2="390.00" stroke="#c4c4c4" stroke-width="0.8" />
<text x="8.30" y="387.70" font-family="Liberation Sans" font-size="5.6" font-weight="bold" fill="#217346" text-anchor="middle" >15</text>
<line x1="2.00" y1="392.20" x2="19.00" y2="392.20" stroke="#c4c4c4" stroke-width="0.8" />
<line x1="2.00" y1="405.00" x2="19.00" y2="405.00" stroke="#c4c4c4" stroke-width="0.8" />
<text x="8.30" y="402.70" font-family="Liberation Sans" font-size="5.6" font-weight="bold" fill="#333" text-anchor="middle" >17</text>
<line x1="2.00" y1="427.80" x2="19.00" y2="427.80" stroke="#c4c4c4" stroke-width="0.8" />
<text x="8.30" y="425.50" font-family="Liberation Sans" font-size="5.6" font-weight="bold" fill="#333" text-anchor="middle" >18</text>
<line x1="2.00" y1="450.30" x2="19.00" y2="450.30" stroke="#c4c4c4" stroke-width="0.8" />
<text x="8.30" y="448.00" font-family="Liberation Sans" font-size="5.6" font-weight="bold" fill="#333" text-anchor="middle" >19</text>
<line x1="2.00" y1="466.20" x2="19.00" y2="466.20" stroke="#c4c4c4" stroke-width="0.8" />
<text x="8.30" y="463.90" font-family="Liberation Sans" font-size="5.6" font-weight="bold" fill="#333" text-anchor="middle" >20</text>
<line x1="2.00" y1="490.60" x2="19.00" y2="490.60" stroke="#c4c4c4" stroke-width="0.8" />
<text x="8.30" y="488.30" font-family="Liberation Sans" font-size="5.6" font-weight="bold" fill="#333" text-anchor="middle" >21</text>
<line x1="2.00" y1="515.10" x2="19.00" y2="515.10" stroke="#c4c4c4" stroke-width="0.8" />
<text x="8.30" y="512.80" font-family="Liberation Sans" font-size="5.6" font-weight="bold" fill="#333" text-anchor="middle" >22</text>
<line x1="2.00" y1="539.40" x2="19.00" y2="539.40" stroke="#c4c4c4" stroke-width="0.8" />
<text x="8.30" y="537.10" font-family="Liberation Sans" font-size="5.6" font-weight="bold" fill="#333" text-anchor="middle" >23</text>
<line x1="2.00" y1="564.00" x2="19.00" y2="564.00" stroke="#c4c4c4" stroke-width="0.8" />
<text x="8.30" y="561.70" font-family="Liberation Sans" font-size="5.6" font-weight="bold" fill="#333" text-anchor="middle" >24</text>
<line x1="2.00" y1="588.20" x2="19.00" y2="588.20" stroke="#c4c4c4" stroke-width="0.8" />
<text x="8.30" y="585.90" font-family="Liberation Sans" font-size="5.6" font-weight="bold" fill="#333" text-anchor="middle" >25</text>
<line x1="2.00" y1="591.00" x2="19.00" y2="591.00" stroke="#c4c4c4" stroke-width="0.8" />
<line x1="2.00" y1="604.00" x2="19.00" y2="604.00" stroke="#c4c4c4" stroke-width="0.8" />
<text x="8.30" y="601.70" font-family="Liberation Sans" font-size="5.6" font-weight="bold" fill="#333" text-anchor="middle" >27</text>
<line x1="18.70" y1="194.00" x2="18.70" y2="613.30" stroke="#c4c4c4" stroke-width="0.8" />
<line x1="20.00" y1="196.10" x2="26.00" y2="196.10" stroke="#e2e2e2" stroke-width="0.8" />
<line x1="627.00" y1="196.10" x2="638.00" y2="196.10" stroke="#e2e2e2" stroke-width="0.8" />
<line x1="20.00" y1="212.10" x2="26.00" y2="212.10" stroke="#e2e2e2" stroke-width="0.8" />
<line x1="627.00" y1="212.10" x2="638.00" y2="212.10" stroke="#e2e2e2" stroke-width="0.8" />
<line x1="20.00" y1="225.80" x2="26.00" y2="225.80" stroke="#e2e2e2" stroke-width="0.8" />
<line x1="627.00" y1="225.80" x2="638.00" y2="225.80" stroke="#e2e2e2" stroke-width="0.8" />
<line x1="20.00" y1="241.00" x2="26.00" y2="241.00" stroke="#e2e2e2" stroke-width="0.8" />
<line x1="627.00" y1="241.00" x2="638.00" y2="241.00" stroke="#e2e2e2" stroke-width="0.8" />
<line x1="20.00" y1="243.50" x2="26.00" y2="243.50" stroke="#e2e2e2" stroke-width="0.8" />
<line x1="627.00" y1="243.50" x2="638.00" y2="243.50" stroke="#e2e2e2" stroke-width="0.8" />
<line x1="20.00" y1="256.00" x2="26.00" y2="256.00" stroke="#e2e2e2" stroke-width="0.8" />
<line x1="627.00" y1="256.00" x2="638.00" y2="256.00" stroke="#e2e2e2" stroke-width="0.8" />
<line x1="20.00" y1="272.70" x2="26.00" y2="272.70" stroke="#e2e2e2" stroke-width="0.8" />
<line x1="627.00" y1="272.70" x2="638.00" y2="272.70" stroke="#e2e2e2" stroke-width="0.8" />
<line x1="20.00" y1="288.60" x2="26.00" y2="288.60" stroke="#e2e2e2" stroke-width="0.8" />
<line x1="627.00" y1="288.60" x2="638.00" y2="288.60" stroke="#e2e2e2" stroke-width="0.8" />
<line x1="20.00" y1="290.60" x2="26.00" y2="290.60" stroke="#e2e2e2" stroke-width="0.8" />
<line x1="627.00" y1="290.60" x2="638.00" y2="290.60" stroke="#e2e2e2" stroke-width="0.8" />
<line x1="20.00" y1="308.20" x2="26.00" y2="308.20" stroke="#e2e2e2" stroke-width="0.8" />
<line x1="627.00" y1="308.20" x2="638.00" y2="308.20" stroke="#e2e2e2" stroke-width="0.8" />
<line x1="20.00" y1="324.40" x2="26.00" y2="324.40" stroke="#e2e2e2" stroke-width="0.8" />
<line x1="627.00" y1="324.40" x2="638.00" y2="324.40" stroke="#e2e2e2" stroke-width="0.8" />
<line x1="20.00" y1="340.40" x2="26.00" y2="340.40" stroke="#e2e2e2" stroke-width="0.8" />
<line x1="627.00" y1="340.40" x2="638.00" y2="340.40" stroke="#e2e2e2" stroke-width="0.8" />
<line x1="20.00" y1="356.60" x2="26.00" y2="356.60" stroke="#e2e2e2" stroke-width="0.8" />
<line x1="627.00" y1="356.60" x2="638.00" y2="356.60" stroke="#e2e2e2" stroke-width="0.8" />
<line x1="20.00" y1="373.40" x2="26.00" y2="373.40" stroke="#e2e2e2" stroke-width="0.8" />
<line x1="627.00" y1="373.40" x2="638.00" y2="373.40" stroke="#e2e2e2" stroke-width="0.8" />
<line x1="20.00" y1="390.00" x2="26.00" y2="390.00" stroke="#e2e2e2" stroke-width="0.8" />
<line x1="627.00" y1="390.00" x2="638.00" y2="390.00" stroke="#e2e2e2" stroke-width="0.8" />
<line x1="20.00" y1="392.20" x2="26.00" y2="392.20" stroke="#e2e2e2" stroke-width="0.8" />
<line x1="627.00" y1="392.20" x2="638.00" y2="392.20" stroke="#e2e2e2" stroke-width="0.8" />
<line x1="20.00" y1="405.00" x2="26.00" y2="405.00" stroke="#e2e2e2" stroke-width="0.8" />
<line x1="627.00" y1="405.00" x2="638.00" y2="405.00" stroke="#e2e2e2" stroke-width="0.8" />
<line x1="20.00" y1="427.80" x2="26.00" y2="427.80" stroke="#e2e2e2" stroke-width="0.8" />
<line x1="627.00" y1="427.80" x2="638.00" y2="427.80" stroke="#e2e2e2" stroke-width="0.8" />
<line x1="20.00" y1="450.30" x2="26.00" y2="450.30" stroke="#e2e2e2" stroke-width="0.8" />
<line x1="627.00" y1="450.30" x2="638.00" y2="450.30" stroke="#e2e2e2" stroke-width="0.8" />
<line x1="20.00" y1="466.20" x2="26.00" y2="466.20" stroke="#e2e2e2" stroke-width="0.8" />
<line x1="627.00" y1="466.20" x2="638.00" y2="466.20" stroke="#e2e2e2" stroke-width="0.8" />
<line x1="20.00" y1="490.60" x2="26.00" y2="490.60" stroke="#e2e2e2" stroke-width="0.8" />
<line x1="627.00" y1="490.60" x2="638.00" y2="490.60" stroke="#e2e2e2" stroke-width="0.8" />
<line x1="20.00" y1="515.10" x2="26.00" y2="515.10" stroke="#e2e2e2" stroke-width="0.8" />
<line x1="627.00" y1="515.10" x2="638.00" y2="515.10" stroke="#e2e2e2" stroke-width="0.8" />
<line x1="20.00" y1="539.40" x2="26.00" y2="539.40" stroke="#e2e2e2" stroke-width="0.8" />
<line x1="627.00" y1="539.40" x2="638.00" y2="539.40" stroke="#e2e2e2" stroke-width="0.8" />
<line x1="20.00" y1="564.00" x2="26.00" y2="564.00" stroke="#e2e2e2" stroke-width="0.8" />
<line x1="627.00" y1="564.00" x2="638.00" y2="564.00" stroke="#e2e2e2" stroke-width="0.8" />
<line x1="20.00" y1="588.20" x2="26.00" y2="588.20" stroke="#e2e2e2" stroke-width="0.8" />
<line x1="627.00" y1="588.20" x2="638.00" y2="588.20" stroke="#e2e2e2" stroke-width="0.8" />
<line x1="20.00" y1="591.00" x2="26.00" y2="591.00" stroke="#e2e2e2" stroke-width="0.8" />
<line x1="627.00" y1="591.00" x2="638.00" y2="591.00" stroke="#e2e2e2" stroke-width="0.8" />
<line x1="20.00" y1="604.00" x2="26.00" y2="604.00" stroke="#e2e2e2" stroke-width="0.8" />
<line x1="627.00" y1="604.00" x2="638.00" y2="604.00" stroke="#e2e2e2" stroke-width="0.8" />
<text x="223.3" y="512.6" font-family="Liberation Sans" font-size="49.4" fill="#8c8c8c" stroke="#8c8c8c" stroke-width="0.7" transform="translate(223.3 0) scale(1.05 1) translate(-223.3 0)">Página 1</text>
<line x1="26.00" y1="197.60" x2="626.40" y2="197.60" stroke="#444444" stroke-width="1.4" />
<line x1="26.00" y1="240.60" x2="626.40" y2="240.60" stroke="#d0d0d0" stroke-width="1.4" />
<line x1="26.00" y1="197.00" x2="26.00" y2="240.50" stroke="#444444" stroke-width="1.4" />
<line x1="109.00" y1="197.00" x2="109.00" y2="240.50" stroke="#707070" stroke-width="1.4" />
<line x1="626.40" y1="197.00" x2="626.40" y2="240.50" stroke="#444444" stroke-width="1.4" />
<line x1="26.00" y1="244.40" x2="626.40" y2="244.40" stroke="#444444" stroke-width="1.4" />
<line x1="26.00" y1="256.20" x2="626.40" y2="256.20" stroke="#c4c4c4" stroke-width="1.3" />
<line x1="26.00" y1="272.60" x2="410.00" y2="272.60" stroke="#cccccc" stroke-width="1.3" />
<line x1="26.00" y1="288.50" x2="626.40" y2="288.50" stroke="#444444" stroke-width="1.4" />
<line x1="26.00" y1="244.50" x2="26.00" y2="288.50" stroke="#444444" stroke-width="1.4" />
<line x1="626.40" y1="244.50" x2="626.40" y2="288.50" stroke="#444444" stroke-width="1.4" />
<line x1="109.00" y1="256.30" x2="109.00" y2="288.50" stroke="#444444" stroke-width="1.4" />
<line x1="256.00" y1="256.30" x2="256.00" y2="288.50" stroke="#444444" stroke-width="1.4" />
<line x1="334.50" y1="256.30" x2="334.50" y2="288.50" stroke="#444444" stroke-width="1.4" />
<line x1="410.00" y1="256.30" x2="410.00" y2="288.50" stroke="#444444" stroke-width="1.4" />
<line x1="482.00" y1="256.30" x2="482.00" y2="288.50" stroke="#444444" stroke-width="1.4" />
<line x1="26.00" y1="292.30" x2="626.40" y2="292.30" stroke="#8c8c8c" stroke-width="1.4" />
<line x1="26.00" y1="308.20" x2="626.40" y2="308.20" stroke="#9a9a9a" stroke-width="1.4" />
<line x1="26.00" y1="292.20" x2="26.00" y2="308.10" stroke="#444444" stroke-width="1.4" />
<line x1="626.40" y1="292.20" x2="626.40" y2="308.10" stroke="#444444" stroke-width="1.4" />
<line x1="109.00" y1="308.10" x2="109.00" y2="390.00" stroke="#444444" stroke-width="1.4" />
<line x1="256.00" y1="308.10" x2="256.00" y2="390.00" stroke="#444444" stroke-width="1.4" />
<line x1="409.40" y1="308.10" x2="409.40" y2="390.00" stroke="#444444" stroke-width="1.4" />
<line x1="626.40" y1="308.10" x2="626.40" y2="390.00" stroke="#444444" stroke-width="1.4" />
<line x1="26.00" y1="324.80" x2="626.40" y2="324.80" stroke="#bdbdbd" stroke-width="1.3" />
<line x1="26.00" y1="324.60" x2="26.00" y2="340.40" stroke="#444444" stroke-width="1.4" />
<line x1="26.00" y1="340.40" x2="626.40" y2="340.40" stroke="#444444" stroke-width="1.4" />
<line x1="26.00" y1="357.00" x2="626.40" y2="357.00" stroke="#444444" stroke-width="1.4" />
<line x1="26.00" y1="357.00" x2="26.00" y2="390.00" stroke="#444444" stroke-width="1.4" />
<line x1="334.30" y1="357.00" x2="334.30" y2="390.00" stroke="#444444" stroke-width="1.4" />
<line x1="26.00" y1="373.70" x2="409.40" y2="373.70" stroke="#444444" stroke-width="1.4" />
<line x1="26.00" y1="390.00" x2="626.40" y2="390.00" stroke="#444444" stroke-width="1.4" />
<line x1="26.00" y1="392.60" x2="626.40" y2="392.60" stroke="#444444" stroke-width="1.4" />
<line x1="26.00" y1="404.80" x2="626.40" y2="404.80" stroke="#444444" stroke-width="1.4" />
<line x1="26.00" y1="392.60" x2="26.00" y2="404.80" stroke="#444444" stroke-width="1.4" />
<line x1="626.40" y1="392.60" x2="626.40" y2="404.80" stroke="#444444" stroke-width="1.4" />
<line x1="109.00" y1="404.80" x2="109.00" y2="450.30" stroke="#444444" stroke-width="1.4" />
<line x1="409.40" y1="404.80" x2="409.40" y2="450.30" stroke="#444444" stroke-width="1.4" />
<line x1="256.00" y1="404.80" x2="256.00" y2="588.00" stroke="#444444" stroke-width="1.4" />
<line x1="482.00" y1="404.80" x2="482.00" y2="588.00" stroke="#444444" stroke-width="1.4" />
<line x1="626.40" y1="404.80" x2="626.40" y2="588.00" stroke="#444444" stroke-width="1.4" />
<line x1="26.00" y1="427.70" x2="409.40" y2="427.70" stroke="#444444" stroke-width="1.4" />
<line x1="26.00" y1="427.70" x2="26.00" y2="588.00" stroke="#444444" stroke-width="1.4" />
<line x1="334.30" y1="427.70" x2="334.30" y2="588.00" stroke="#444444" stroke-width="1.4" />
<line x1="26.00" y1="450.30" x2="482.00" y2="450.30" stroke="#444444" stroke-width="1.4" />
<line x1="482.00" y1="450.30" x2="626.40" y2="450.30" stroke="#a0a0a0" stroke-width="1.4" />
<line x1="26.00" y1="466.10" x2="626.40" y2="466.10" stroke="#444444" stroke-width="1.4" />
<line x1="26.00" y1="491.00" x2="626.40" y2="491.00" stroke="#555555" stroke-width="1.4" />
<line x1="26.00" y1="515.10" x2="626.40" y2="515.10" stroke="#444444" stroke-width="1.4" />
<line x1="26.00" y1="539.40" x2="626.40" y2="539.40" stroke="#444444" stroke-width="1.4" />
<line x1="26.00" y1="564.20" x2="626.40" y2="564.20" stroke="#444444" stroke-width="1.4" />
<line x1="26.00" y1="588.00" x2="626.40" y2="588.00" stroke="#444444" stroke-width="1.4" />
<line x1="26.00" y1="591.50" x2="626.40" y2="591.50" stroke="#444444" stroke-width="1.4" />
<line x1="26.00" y1="603.80" x2="626.40" y2="603.80" stroke="#444444" stroke-width="1.4" />
<line x1="26.00" y1="591.50" x2="26.00" y2="603.80" stroke="#444444" stroke-width="1.4" />
<line x1="626.40" y1="591.50" x2="626.40" y2="603.80" stroke="#444444" stroke-width="1.4" />
<line x1="109.00" y1="603.80" x2="109.00" y2="613.30" stroke="#444444" stroke-width="1.4" />
<line x1="335.00" y1="603.80" x2="335.00" y2="613.30" stroke="#444444" stroke-width="1.4" />
<line x1="409.50" y1="603.80" x2="409.50" y2="613.30" stroke="#444444" stroke-width="1.4" />
<line x1="482.00" y1="603.80" x2="482.00" y2="613.30" stroke="#444444" stroke-width="1.4" />
<line x1="554.30" y1="603.80" x2="554.30" y2="613.30" stroke="#444444" stroke-width="1.4" />
<line x1="626.40" y1="603.80" x2="626.40" y2="613.30" stroke="#444444" stroke-width="1.4" />
<text x="225.10" y="224.60" font-family="Liberation Sans" font-size="14.3" font-weight="bold" fill="#111" text-anchor="start" textLength="284.60" lengthAdjust="spacingAndGlyphs"  stroke="#111" stroke-width="0.3">ORDEN DE TRABAJO DE MANTENIMIENTO</text>
<text x="220.60" y="252.60" font-family="Liberation Sans" font-size="9.8" font-weight="bold" fill="#151515" text-anchor="start" textLength="211.40" lengthAdjust="spacingAndGlyphs"  stroke="#151515" stroke-width="0.3">INFORMACION ORDEN DE TRABAJO (OTM)</text>
<text x="48.30" y="267.20" font-family="Liberation Sans" font-size="7.8" font-weight="bold" fill="#151515" text-anchor="start" textLength="37.50" lengthAdjust="spacingAndGlyphs"  stroke="#151515" stroke-width="0.3">N° OTM:</text>
<text x="177.00" y="266.80" font-family="Liberation Sans" font-size="6.5" font-weight="normal" fill="#2a2a2a" text-anchor="start" textLength="12.70" lengthAdjust="spacingAndGlyphs"  stroke="#2a2a2a" stroke-width="0.18">285</text>
<text x="270.60" y="267.20" font-family="Liberation Sans" font-size="7.8" font-weight="bold" fill="#151515" text-anchor="start" textLength="49.70" lengthAdjust="spacingAndGlyphs"  stroke="#151515" stroke-width="0.3">TIPO OTM:</text>
<text x="351.40" y="266.80" font-family="Liberation Sans" font-size="6.8" font-weight="normal" fill="#2a2a2a" text-anchor="start" textLength="41.60" lengthAdjust="spacingAndGlyphs"  stroke="#2a2a2a" stroke-width="0.18">Preventivo</text>
<text x="429.50" y="264.60" font-family="Liberation Sans" font-size="8.2" font-weight="bold" fill="#151515" text-anchor="start" textLength="33.50" lengthAdjust="spacingAndGlyphs"  stroke="#151515" stroke-width="0.3">LUGAR</text>
<text x="418.20" y="275.80" font-family="Liberation Sans" font-size="8.2" font-weight="bold" fill="#151515" text-anchor="start" textLength="55.40" lengthAdjust="spacingAndGlyphs"  stroke="#151515" stroke-width="0.3">EJECUCION</text>
<clipPath id="c1"><rect x="410" y="256" width="72" height="32.5"/></clipPath>
<text x="433.30" y="286.70" font-family="Liberation Sans" font-size="8.2" font-weight="bold" fill="#151515" text-anchor="start" textLength="25.20" lengthAdjust="spacingAndGlyphs" clip-path="url(#c1)" stroke="#151515" stroke-width="0.3">OTM:</text>
<text x="508.30" y="274.70" font-family="Liberation Sans" font-size="7.2" font-weight="normal" fill="#2a2a2a" text-anchor="start" textLength="91.70" lengthAdjust="spacingAndGlyphs"  stroke="#2a2a2a" stroke-width="0.18">Zona Mangas y Corrales</text>
<text x="45.80" y="283.40" font-family="Liberation Sans" font-size="8" font-weight="bold" fill="#151515" text-anchor="start" textLength="42.90" lengthAdjust="spacingAndGlyphs"  stroke="#151515" stroke-width="0.3">ESTADO:</text>
<text x="170.20" y="282.60" font-family="Liberation Sans" font-size="6.8" font-weight="normal" fill="#2a2a2a" text-anchor="start" textLength="26.30" lengthAdjust="spacingAndGlyphs"  stroke="#2a2a2a" stroke-width="0.18">Abierta</text>
<text x="265.70" y="283.60" font-family="Liberation Sans" font-size="8" font-weight="bold" fill="#151515" text-anchor="start" textLength="58.50" lengthAdjust="spacingAndGlyphs"  stroke="#151515" stroke-width="0.3">PRIORIDAD:</text>
<text x="365.30" y="282.60" font-family="Liberation Sans" font-size="6.8" font-weight="normal" fill="#2a2a2a" text-anchor="start" textLength="15.10" lengthAdjust="spacingAndGlyphs"  stroke="#2a2a2a" stroke-width="0.18">Alta</text>
<clipPath id="c2"><rect x="20" y="308" width="89" height="17"/></clipPath>
<text x="26.10" y="319.40" font-family="Liberation Sans" font-size="8" font-weight="bold" fill="#151515" text-anchor="start" textLength="85.40" lengthAdjust="spacingAndGlyphs" clip-path="url(#c2)" stroke="#151515" stroke-width="0.3">GENERADA POR:</text>
<text x="156.00" y="318.80" font-family="Liberation Sans" font-size="7.5" font-weight="normal" fill="#2a2a2a" text-anchor="start" textLength="52.90" lengthAdjust="spacingAndGlyphs"  stroke="#2a2a2a" stroke-width="0.18">Carlos Castro</text>
<text x="300.80" y="319.40" font-family="Liberation Sans" font-size="8" font-weight="bold" fill="#151515" text-anchor="start" textLength="63.90" lengthAdjust="spacingAndGlyphs"  stroke="#151515" stroke-width="0.3">ASIGNADA A:</text>
<text x="489.40" y="318.80" font-family="Liberation Sans" font-size="7" font-weight="normal" fill="#2a2a2a" text-anchor="start" textLength="57.80" lengthAdjust="spacingAndGlyphs"  stroke="#2a2a2a" stroke-width="0.18">Jose luis Reyes</text>
<text x="48.40" y="336.60" font-family="Liberation Sans" font-size="9.6" font-weight="bold" fill="#151515" text-anchor="start" textLength="38.60" lengthAdjust="spacingAndGlyphs"  stroke="#151515" stroke-width="0.3">CARGO:</text>
<text x="144.30" y="335.80" font-family="Liberation Sans" font-size="7.2" font-weight="normal" fill="#2a2a2a" text-anchor="start" textLength="75.70" lengthAdjust="spacingAndGlyphs"  stroke="#2a2a2a" stroke-width="0.18">Auxiliar de ingeniería</text>
<text x="314.60" y="335.40" font-family="Liberation Sans" font-size="8.2" font-weight="bold" fill="#151515" text-anchor="start" textLength="38.00" lengthAdjust="spacingAndGlyphs"  stroke="#151515" stroke-width="0.3">CARGO:</text>
<clipPath id="c3"><rect x="20" y="340" width="89" height="17"/></clipPath>
<text x="23.00" y="351.20" font-family="Liberation Sans" font-size="7.8" font-weight="bold" fill="#151515" text-anchor="start" textLength="88.50" lengthAdjust="spacingAndGlyphs" clip-path="url(#c3)" stroke="#151515" stroke-width="0.3">FECHA ASIGNACION</text>
<text x="163.80" y="351.20" font-family="Liberation Sans" font-size="7.5" font-weight="normal" fill="#2a2a2a" text-anchor="start" textLength="38.00" lengthAdjust="spacingAndGlyphs"  stroke="#2a2a2a" stroke-width="0.18">28-nov-22</text>
<text x="276.00" y="351.30" font-family="Liberation Sans" font-size="8" font-weight="bold" fill="#151515" text-anchor="start" textLength="114.10" lengthAdjust="spacingAndGlyphs"  stroke="#151515" stroke-width="0.3">FECHA PROGRAMADA:</text>
<text x="503.60" y="351.20" font-family="Liberation Sans" font-size="7.2" font-weight="normal" fill="#2a2a2a" text-anchor="start" textLength="30.40" lengthAdjust="spacingAndGlyphs"  stroke="#2a2a2a" stroke-width="0.18">3-dic-22</text>
<text x="37.30" y="367.70" font-family="Liberation Sans" font-size="7.5" font-weight="bold" fill="#151515" text-anchor="start" textLength="60.90" lengthAdjust="spacingAndGlyphs"  stroke="#151515" stroke-width="0.3">FECHA INICIO:</text>
<text x="263.20" y="368.60" font-family="Liberation Sans" font-size="8.8" font-weight="bold" fill="#151515" text-anchor="start" textLength="64.60" lengthAdjust="spacingAndGlyphs"  stroke="#151515" stroke-width="0.3">HORA INICIO:</text>
<text x="38.30" y="383.90" font-family="Liberation Sans" font-size="7.5" font-weight="bold" fill="#151515" text-anchor="start" textLength="58.90" lengthAdjust="spacingAndGlyphs"  stroke="#151515" stroke-width="0.3">FECHA FINAL:</text>
<text x="264.20" y="384.80" font-family="Liberation Sans" font-size="8.8" font-weight="bold" fill="#151515" text-anchor="start" textLength="63.00" lengthAdjust="spacingAndGlyphs"  stroke="#151515" stroke-width="0.3">HORA FINAL:</text>
<clipPath id="c4"><rect x="410.2" y="357" width="71.0" height="33"/></clipPath>
<text x="405.50" y="376.50" font-family="Liberation Sans" font-size="9.4" font-weight="bold" fill="#151515" text-anchor="start" textLength="85.50" lengthAdjust="spacingAndGlyphs" clip-path="url(#c4)" stroke="#151515" stroke-width="0.3">TOTAL DE HORAS:</text>
<text x="176.40" y="403.10" font-family="Liberation Sans" font-size="11" font-weight="bold" fill="#151515" text-anchor="start" textLength="300.00" lengthAdjust="spacingAndGlyphs"  stroke="#151515" stroke-width="0.3">INFORMACION MANTENIMIENTO PREDICTIVO - PREVENTIVO</text>
<clipPath id="c5"><rect x="20.6" y="405" width="88.4" height="23"/></clipPath>
<text x="19.00" y="419.20" font-family="Liberation Sans" font-size="8" font-weight="bold" fill="#151515" text-anchor="start" textLength="97.00" lengthAdjust="spacingAndGlyphs" clip-path="url(#c5)" stroke="#151515" stroke-width="0.3">NOMBRE DE EQUIPO</text>
<text x="158.00" y="418.60" font-family="Liberation Sans" font-size="6.8" font-weight="normal" fill="#2a2a2a" text-anchor="start" textLength="49.90" lengthAdjust="spacingAndGlyphs"  stroke="#2a2a2a" stroke-width="0.18">Zona en general</text>
<clipPath id="c6"><rect x="256.6" y="405" width="152.39999999999998" height="23"/></clipPath>
<text x="243.00" y="419.20" font-family="Liberation Sans" font-size="8" font-weight="bold" fill="#151515" text-anchor="start" textLength="104.50" lengthAdjust="spacingAndGlyphs" clip-path="url(#c6)" stroke="#151515" stroke-width="0.3">CENTRO DE COSTOS:</text>
<text x="416.50" y="424.20" font-family="Liberation Sans" font-size="8.4" font-weight="bold" fill="#151515" text-anchor="start" textLength="56.90" lengthAdjust="spacingAndGlyphs"  stroke="#151515" stroke-width="0.3">OPERADOR</text>
<text x="425.70" y="434.90" font-family="Liberation Sans" font-size="8.4" font-weight="bold" fill="#151515" text-anchor="start" textLength="34.50" lengthAdjust="spacingAndGlyphs"  stroke="#151515" stroke-width="0.3">EQUIPO:</text>
<clipPath id="c7"><rect x="26.6" y="428.3" width="82.0" height="21.69999999999999"/></clipPath>
<text x="33.20" y="431.60" font-family="Liberation Sans" font-size="9.2" font-weight="bold" fill="#151515" text-anchor="start" textLength="69.10" lengthAdjust="spacingAndGlyphs" clip-path="url(#c7)" stroke="#151515" stroke-width="0.3">ACTIVIDAD DE</text>
<text x="29.00" y="442.60" font-family="Liberation Sans" font-size="9.2" font-weight="bold" fill="#151515" text-anchor="start" textLength="76.30" lengthAdjust="spacingAndGlyphs" clip-path="url(#c7)" stroke="#151515" stroke-width="0.3">MANTENIMIENT</text>
<text x="63.00" y="453.60" font-family="Liberation Sans" font-size="9.2" font-weight="bold" fill="#151515" text-anchor="start" textLength="9.00" lengthAdjust="spacingAndGlyphs" clip-path="url(#c7)" stroke="#151515" stroke-width="0.3">O</text>
<text x="139.80" y="441.20" font-family="Liberation Sans" font-size="7" font-weight="normal" fill="#2a2a2a" text-anchor="start" textLength="85.20" lengthAdjust="spacingAndGlyphs"  stroke="#2a2a2a" stroke-width="0.18">40. Ruta de mantenimiento</text>
<clipPath id="c8"><rect x="256.6" y="428.3" width="77.19999999999999" height="21.69999999999999"/></clipPath>
<text x="281.00" y="431.60" font-family="Liberation Sans" font-size="9.2" font-weight="bold" fill="#151515" text-anchor="start" textLength="29.00" lengthAdjust="spacingAndGlyphs" clip-path="url(#c8)" stroke="#151515" stroke-width="0.3">TIPO</text>
<text x="259.00" y="442.60" font-family="Liberation Sans" font-size="9.2" font-weight="bold" fill="#151515" text-anchor="start" textLength="72.00" lengthAdjust="spacingAndGlyphs" clip-path="url(#c8)" stroke="#151515" stroke-width="0.3">MANTENIMIEN</text>
<text x="287.00" y="453.60" font-family="Liberation Sans" font-size="9.2" font-weight="bold" fill="#151515" text-anchor="start" textLength="17.00" lengthAdjust="spacingAndGlyphs" clip-path="url(#c8)" stroke="#151515" stroke-width="0.3">TO</text>
<text x="121.50" y="460.50" font-family="Liberation Sans" font-size="8.4" font-weight="bold" fill="#151515" text-anchor="start" textLength="39.60" lengthAdjust="spacingAndGlyphs"  stroke="#151515" stroke-width="0.3">TAREAS</text>
<clipPath id="c9"><rect x="256.6" y="450.8" width="77.19999999999999" height="14.800000000000011"/></clipPath>
<text x="268.30" y="456.30" font-family="Liberation Sans" font-size="8.4" font-weight="bold" fill="#151515" text-anchor="start" textLength="52.70" lengthAdjust="spacingAndGlyphs" clip-path="url(#c9)" stroke="#151515" stroke-width="0.3">DURACION</text>
<text x="282.50" y="467.20" font-family="Liberation Sans" font-size="8.4" font-weight="bold" fill="#151515" text-anchor="start" textLength="24.40" lengthAdjust="spacingAndGlyphs" clip-path="url(#c9)" stroke="#151515" stroke-width="0.3">(min)</text>
<text x="373.90" y="460.60" font-family="Liberation Sans" font-size="7.8" font-weight="bold" fill="#151515" text-anchor="start" textLength="69.10" lengthAdjust="spacingAndGlyphs"  stroke="#151515" stroke-width="0.3">HERRAMIENTAS</text>
<text x="546.00" y="460.70" font-family="Liberation Sans" font-size="8" font-weight="bold" fill="#151515" text-anchor="start" textLength="16.00" lengthAdjust="spacingAndGlyphs"  stroke="#151515" stroke-width="0.3">EPP</text>
<text x="28.50" y="481.80" font-family="Liberation Sans" font-size="7.5" font-weight="normal" fill="#2a2a2a" text-anchor="start" textLength="215.70" lengthAdjust="spacingAndGlyphs"  stroke="#2a2a2a" stroke-width="0.18">1 Ejecutar de acuerdo a formato de ruta de mantenimiento</text>
<text x="527.50" y="481.00" font-family="Liberation Sans" font-size="7.2" font-weight="normal" fill="#2a2a2a" text-anchor="start" textLength="54.40" lengthAdjust="spacingAndGlyphs"  stroke="#2a2a2a" stroke-width="0.18">1 Guantes G40</text>
<text x="503.00" y="506.00" font-family="Liberation Sans" font-size="7.2" font-weight="normal" fill="#2a2a2a" text-anchor="start" textLength="103.00" lengthAdjust="spacingAndGlyphs"  stroke="#2a2a2a" stroke-width="0.18">2. Gafas de seguridad claras</text>
<text x="513.60" y="530.10" font-family="Liberation Sans" font-size="7.2" font-weight="normal" fill="#2a2a2a" text-anchor="start" textLength="82.20" lengthAdjust="spacingAndGlyphs"  stroke="#2a2a2a" stroke-width="0.18">3. Casco de seguridad</text>
<text x="512.60" y="554.20" font-family="Liberation Sans" font-size="7.2" font-weight="normal" fill="#2a2a2a" text-anchor="start" textLength="84.30" lengthAdjust="spacingAndGlyphs"  stroke="#2a2a2a" stroke-width="0.18">4. Protector Auditivos</text>
<text x="248.90" y="600.50" font-family="Liberation Sans" font-size="9.8" font-weight="bold" fill="#151515" text-anchor="start" textLength="154.40" lengthAdjust="spacingAndGlyphs"  stroke="#151515" stroke-width="0.3">INFORMACION DE REPUESTOS</text>
<clipPath id="c10"><rect x="20.6" y="604.3" width="88.0" height="9.0"/></clipPath>
<text x="21.50" y="615.00" font-family="Liberation Sans" font-size="9.8" font-weight="bold" fill="#151515" text-anchor="start" textLength="92.00" lengthAdjust="spacingAndGlyphs" clip-path="url(#c10)" stroke="#151515" stroke-width="0.3">CODIGO REPUESTO</text>
<clipPath id="c11"><rect x="109.5" y="604.3" width="225.0" height="9.0"/></clipPath>
<text x="188.30" y="615.00" font-family="Liberation Sans" font-size="9.8" font-weight="bold" fill="#151515" text-anchor="start" textLength="67.20" lengthAdjust="spacingAndGlyphs" clip-path="url(#c11)" stroke="#151515" stroke-width="0.3">DESCRIPCION</text>
<clipPath id="c12"><rect x="335.5" y="604.3" width="73.5" height="9.0"/></clipPath>
<text x="359.40" y="610.20" font-family="Liberation Sans" font-size="8" font-weight="bold" fill="#151515" text-anchor="start" textLength="26.80" lengthAdjust="spacingAndGlyphs" clip-path="url(#c12)" stroke="#151515" stroke-width="0.3">CANT.</text>
<clipPath id="c13"><rect x="410" y="604.3" width="71.5" height="9.0"/></clipPath>
<text x="404.00" y="615.00" font-family="Liberation Sans" font-size="9.8" font-weight="bold" fill="#151515" text-anchor="start" textLength="84.00" lengthAdjust="spacingAndGlyphs" clip-path="url(#c13)" stroke="#151515" stroke-width="0.3">CANT. EMPLEADA</text>
<clipPath id="c14"><rect x="482.5" y="604.3" width="71.29999999999995" height="9.0"/></clipPath>
<text x="476.00" y="615.00" font-family="Liberation Sans" font-size="9.8" font-weight="bold" fill="#151515" text-anchor="start" textLength="84.00" lengthAdjust="spacingAndGlyphs" clip-path="url(#c14)" stroke="#151515" stroke-width="0.3">CANT. DEVUELTA</text>
<clipPath id="c15"><rect x="554.8" y="604.3" width="71.20000000000005" height="9.0"/></clipPath>
<text x="557.40" y="615.00" font-family="Liberation Sans" font-size="9.8" font-weight="bold" fill="#151515" text-anchor="start" textLength="66.00" lengthAdjust="spacingAndGlyphs" clip-path="url(#c15)" stroke="#151515" stroke-width="0.3">UND. MEDIDA</text>
<rect x="409.40" y="356.60" width="73.00" height="33.40" fill="none" stroke="#217346" stroke-width="1.6"/>
<rect x="480.60" y="388.20" width="4.00" height="4.00" fill="#217346" stroke="#ffffff" stroke-width="0.6"/>
<rect x="19.00" y="193.80" width="620.00" height="1.90" fill="#7070c4" />
<rect x="18.80" y="193.80" width="1.60" height="419.50" fill="#7070c4" />
<rect x="638.00" y="193.60" width="3.40" height="419.70" fill="#1f1fae" />
<rect x="17.60" y="356.60" width="2.80" height="33.40" fill="#1f557a" />
<rect x="2.00" y="613.30" width="1227.50" height="24.70" fill="#e6e6e6" />
<path d="M24,625.5 l2.5,-2.5 v5 z" fill="#c0c0c0" stroke="none" stroke-width="1" />
<path d="M50,625.5 l-2.5,-2.5 v5 z" fill="#c0c0c0" stroke="none" stroke-width="1" />
<rect x="87.80" y="613.30" width="49.40" height="21.70" fill="#ffffff" />
<rect x="87.80" y="633.30" width="49.40" height="2.00" fill="#217346" />
<text x="98.20" y="629.20" font-family="Liberation Sans" font-size="12" font-weight="bold" fill="#217346" text-anchor="start" textLength="27.30" lengthAdjust="spacingAndGlyphs" >OTM</text>
<text x="148.10" y="629.20" font-family="Liberation Sans" font-size="12" font-weight="normal" fill="#6a6a6a" text-anchor="start" textLength="57.90" lengthAdjust="spacingAndGlyphs" >Base Datos</text>
<line x1="220.40" y1="617.00" x2="220.40" y2="633.00" stroke="#c6c6c6" stroke-width="1" />
<text x="232.80" y="629.20" font-family="Liberation Sans" font-size="12" font-weight="normal" fill="#6a6a6a" text-anchor="start" textLength="44.00" lengthAdjust="spacingAndGlyphs" >Act Mtto</text>
<line x1="290.00" y1="617.00" x2="290.00" y2="633.00" stroke="#c6c6c6" stroke-width="1" />
<text x="302.20" y="629.20" font-family="Liberation Sans" font-size="12" font-weight="normal" fill="#6a6a6a" text-anchor="start" textLength="45.50" lengthAdjust="spacingAndGlyphs" >Tar Mtto</text>
<line x1="360.20" y1="617.00" x2="360.20" y2="633.00" stroke="#c6c6c6" stroke-width="1" />
<circle cx="397.7" cy="625.5" r="6.8" fill="none" stroke="#c8c8c8" stroke-width="1"/>
<path d="M394,625.5 h7.4 M397.7,621.8 v7.4" fill="none" stroke="#c8c8c8" stroke-width="1" />
<rect x="737.00" y="621.00" width="1.60" height="1.40" fill="#b0b0b0" />
<rect x="737.00" y="624.50" width="1.60" height="1.40" fill="#b0b0b0" />
<rect x="737.00" y="628.00" width="1.60" height="1.40" fill="#b0b0b0" />
<rect x="753.30" y="619.00" width="459.70" height="13.50" fill="#e0e0e0" />
<rect x="753.30" y="619.00" width="13.00" height="13.50" fill="#ffffff" stroke="#c8c8c8" stroke-width="0.8"/>
<path d="M757.8,625.7 l3,-3 v6 z" fill="#555" stroke="none" stroke-width="1" />
<rect x="766.30" y="619.50" width="414.20" height="12.50" fill="#ffffff" stroke="#c8c8c8" stroke-width="0.8"/>
<rect x="1201.00" y="619.00" width="12.00" height="13.50" fill="#ffffff" stroke="#c8c8c8" stroke-width="0.8"/>
<path d="M1208.5,625.7 l-3,-3 v6 z" fill="#555" stroke="none" stroke-width="1" />
<line x1="2.00" y1="638.30" x2="1229.50" y2="638.30" stroke="#d0d0d0" stroke-width="0.8" />
<rect x="2.00" y="638.60" width="1227.50" height="14.40" fill="#f3f3f3" />
<text x="4.00" y="650.50" font-family="Liberation Sans" font-size="11" font-weight="normal" fill="#444" text-anchor="start" textLength="22.00" lengthAdjust="spacingAndGlyphs" >Listo</text>
<rect x="989.50" y="642.50" width="11.50" height="10.50" fill="none" stroke="#777" stroke-width="0.9"/>
<line x1="993.30" y1="642.50" x2="993.30" y2="653.00" stroke="#777" stroke-width="0.9" />
<line x1="989.50" y1="646.00" x2="1001.00" y2="646.00" stroke="#777" stroke-width="0.9" />
<line x1="997.10" y1="642.50" x2="997.10" y2="653.00" stroke="#777" stroke-width="0.9" />
<line x1="989.50" y1="649.50" x2="1001.00" y2="649.50" stroke="#777" stroke-width="0.9" />
<rect x="1023.50" y="642.50" width="13.00" height="10.50" fill="none" stroke="#777" stroke-width="0.9"/>
<rect x="1026.50" y="644.50" width="7.00" height="6.50" fill="none" stroke="#777" stroke-width="0.9"/>
<rect x="1047.40" y="638.60" width="32.90" height="14.40" fill="#d0d0d0" />
<rect x="1058.00" y="642.50" width="12.70" height="10.50" fill="none" stroke="#777" stroke-width="0.9"/>
<line x1="1064.35" y1="642.50" x2="1064.35" y2="648.00" stroke="#777" stroke-width="0.9" />
<line x1="1086.20" y1="648.00" x2="1091.30" y2="648.00" stroke="#555" stroke-width="1.2" />
<line x1="1095.00" y1="648.00" x2="1184.00" y2="648.00" stroke="#c8c8c8" stroke-width="1" />
<rect x="1116.30" y="642.70" width="4.70" height="10.30" fill="#6a6a6a" />
<line x1="1140.70" y1="645.00" x2="1140.70" y2="651.00" stroke="#c0c0c0" stroke-width="1" />
<path d="M1188.4,648 h6.4 M1191.6,644.8 v6.4" fill="none" stroke="#555" stroke-width="1.2" />
<text x="1205.40" y="650.80" font-family="Liberation Sans" font-size="11" font-weight="normal" fill="#444" text-anchor="start" textLength="18.00" lengthAdjust="spacingAndGlyphs" >55%</text>
</svg>
</body></html>
